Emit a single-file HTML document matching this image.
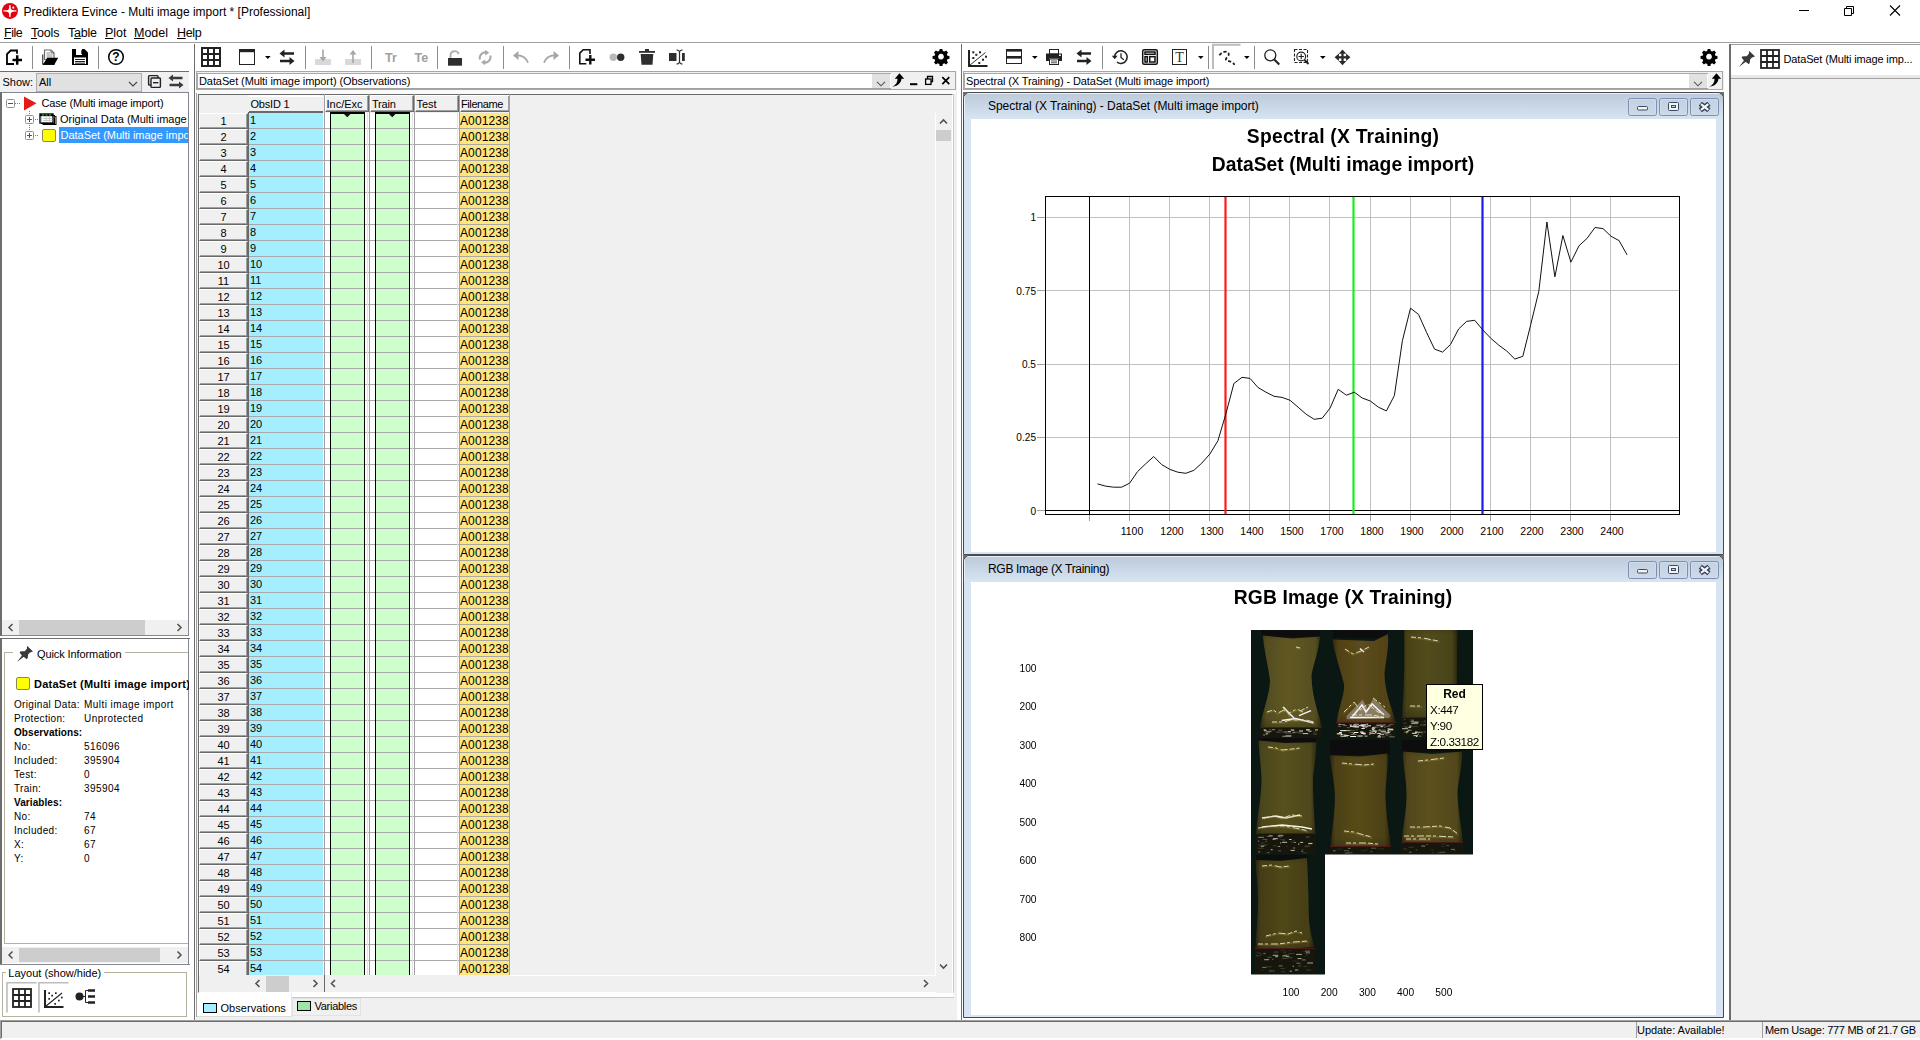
<!DOCTYPE html>
<html><head><meta charset="utf-8"><title>Prediktera Evince</title>
<style>
*{box-sizing:border-box;margin:0;padding:0}
html,body{width:1920px;height:1040px;overflow:hidden;background:#fff}
body{font-family:"Liberation Sans",sans-serif;font-size:11px;color:#000;position:relative}
.a{position:absolute}
.t{position:absolute;white-space:nowrap;line-height:1}
svg{position:absolute;overflow:visible}
.ui{font-size:12px}
.tah{font-size:11px;letter-spacing:.25px}
</style></head><body>
<!-- window bg -->
<div class="a" style="left:0;top:43px;width:1920px;height:995px;background:#f0f0f0"></div>
<!-- title bar -->
<svg style="left:0;top:0" width="24" height="24" viewBox="0 0 24 24">
 <circle cx="9.950" cy="10.950" r="8" fill="#e3000f"/>
 <path d="M9.300 4.900h1.300C10.600 9.700 11 10.300 16.400 10.300v1.300C11 11.600 10.600 12.200 10.600 17.100h-1.300C9.300 12.200 8.900 11.600 3.500 11.600v-1.300C8.900 10.300 9.300 9.700 9.300 4.900z" fill="#fff"/>
 <circle cx="13.300" cy="7.650" r="1.050" fill="#fff"/>
</svg>
<div class="t ui" style="left:23.5px;top:5.5px">Prediktera Evince - Multi image import * [Professional]</div>
<svg style="left:0;top:0" width="1920" height="24" viewBox="0 0 1920 24" fill="none" stroke="#000" stroke-width="1">
 <path d="M1799 10.5h10"/>
 <path d="M1844.5 8.5h7v7h-7z M1846.5 8.5v-2h7v7h-2"/>
 <path d="M1890 5.500l10 10M1900 5.500l-10 10" stroke-width="1.1"/>
</svg>
<!-- menu -->
<div class="t" style="left:4px;top:27px;font-size:12.5px;letter-spacing:-.45px"><u>F</u>ile</div>
<div class="t" style="left:31px;top:27px;font-size:12.5px;letter-spacing:-.2px"><u>T</u>ools</div>
<div class="t" style="left:68px;top:27px;font-size:12.5px;letter-spacing:-.25px">T<u>a</u>ble</div>
<div class="t" style="left:105px;top:27px;font-size:12.5px"><u>P</u>lot</div>
<div class="t" style="left:134px;top:27px;font-size:12.5px"><u>M</u>odel</div>
<div class="t" style="left:177px;top:27px;font-size:12.5px;letter-spacing:-.35px"><u>H</u>elp</div>
<div class="a" style="left:0;top:42px;width:1920px;height:1px;background:#a0a0a0"></div>
<!-- toolbars bg -->
<div class="a" style="left:0;top:43px;width:1920px;height:28px;background:#fff"></div>
<svg style="left:0;top:0" width="1920" height="74" viewBox="0 0 1920 74">
<!-- separators -->
<g stroke="#8d8d8d" stroke-width="1">
<path d="M32.5 46v23M98.500 46v23M305.500 46v23M371.500 46v23M437.500 46v23M503.500 46v23M569.500 46v23M1102.500 46v23M1208.500 46v23M1254.500 46v23"/>
</g>
<!-- new doc -->
<g fill="none" stroke="#000" stroke-width="1.8">
<path d="M17 53.700v-3.200h-6.300l-3.700 3.700v9.800h7"/>
<path d="M12.500 60h9.500M17.200 55.300v9.400" stroke-width="2.500"/>
</g>
<!-- open folder -->
<g>
<path d="M44.500 50h6.500l3 3v6.500h-9.500z" fill="#fff" stroke="#6a6a6a" stroke-width="1.200"/>
<path d="M51 50v3h3" fill="none" stroke="#6a6a6a" stroke-width="1"/>
<path d="M46.500 53h3.500M46.500 55h6M46.500 57h6" stroke="#8a8a8a" stroke-width="1"/>
<path d="M42.700 54.500v9.500" stroke="#555" stroke-width="1.400"/>
<path d="M43 64.500l4.200-6.700h11l-3.800 6.700z" fill="#000"/>
<path d="M42.500 64.300h12" stroke="#000" stroke-width="1.200"/>
</g>
<!-- save -->
<g>
<path d="M72 49h12.500l3.500 3.500v12.500h-16z" fill="#000"/>
<rect x="76" y="49" width="6" height="6" fill="#fff"/>
<rect x="81.300" y="50.200" width="1.600" height="3.800" fill="#000"/>
<rect x="74" y="57.500" width="12" height="6.500" fill="#fff"/>
<path d="M75 59.500h10M75 61.500h10M75 63.200h10" stroke="#000" stroke-width="0.9"/>
</g>
<!-- help -->
<g>
<circle cx="116" cy="57" r="7.300" fill="none" stroke="#000" stroke-width="1.500"/>
<text x="116" y="61.300" font-family="Liberation Sans" font-weight="bold" font-size="12" text-anchor="middle" fill="#000">?</text>
</g>
<!-- grid icon -->
<g fill="none" stroke="#222" stroke-width="2">
<rect x="202" y="48" width="18" height="18"/>
<path d="M208 48v18M214 48v18M202 54h18M202 60h18"/>
</g>
<!-- window icon -->
<g>
<rect x="239.500" y="49.500" width="15" height="15" fill="#fff" stroke="#222" stroke-width="1"/>
<rect x="239" y="49" width="16" height="3.200" fill="#222"/>
<path d="M265 56h5.600l-2.800 3z" fill="#000"/>
</g>
<!-- swap -->
<g id="swp" fill="#222">
<path d="M279.500 53.500l5-4v2.700h9.500v2.600h-9.500v2.700z"/>
<path d="M294.500 61l-5-4v2.700h-9.500v2.600h9.500v2.700z"/>
</g>
<!-- import/export gray -->
<g>
<rect x="315" y="59" width="16" height="6" fill="#d9d9d9"/>
<path d="M323 49.500v10" stroke="#a6a6a6" stroke-width="1.600"/>
<path d="M319.500 57h7l-3.500 4.500z" fill="#a6a6a6"/>
<rect x="345" y="59" width="16" height="6" fill="#d9d9d9"/>
<path d="M353 53v10" stroke="#a6a6a6" stroke-width="1.600"/>
<path d="M349.500 54.500h7l-3.500 -4.500z" fill="#a6a6a6"/>
</g>
<text x="385" y="62" font-family="Liberation Sans" font-weight="bold" font-size="12.500" fill="#a0a0a0">Tr</text>
<text x="414.500" y="62" font-family="Liberation Sans" font-weight="bold" font-size="12.500" fill="#a0a0a0">Te</text>
<!-- lock -->
<g>
<path d="M450.500 58v-2.500a4.200 4.200 0 0 1 8.200 -1.400" fill="none" stroke="#b0b0b0" stroke-width="1.900"/>
<rect x="448" y="58" width="14" height="7.700" fill="#2e2e2e"/>
</g>
<!-- refresh gray -->
<g fill="none" stroke="#a9a9a9" stroke-width="2">
<path d="M480 59.500a5.500 5.500 0 0 1 7 -6.800"/>
<path d="M490.300 55.500a5.500 5.500 0 0 1 -7 6.800"/>
</g>
<path d="M485.300 49.800l4 3 -4.300 2.600z M485 65.200l-4 -3 4.300 -2.600z" fill="#a9a9a9"/>
<!-- undo redo -->
<g fill="none" stroke="#a6a6a6" stroke-width="1.800">
<path d="M516 55.500c6 -0.500 10 2 12 7.300"/>
<path d="M556 55.500c-6 -0.500 -10 2 -12 7.300"/>
</g>
<path d="M513 55.500l5.500 -4.500v9z M559 55.500l-5.500 -4.500v9z" fill="#a6a6a6"/>
<!-- new doc 2 -->
<g fill="none" stroke="#111" stroke-width="1.600">
<path d="M590 54v-4.200h-6.800l-3.400 3.400v10.500h6.500"/>
<path d="M585.500 59.700h9.500M590.300 55v9.500" stroke-width="2.400"/>
</g>
<!-- dots -->
<circle cx="613.300" cy="57.300" r="3.700" fill="#b9b9b9"/>
<circle cx="620.700" cy="57.300" r="3.700" fill="#2e2e2e"/>
<!-- trash -->
<g fill="#2e2e2e">
<rect x="639" y="51" width="16" height="1.800"/>
<rect x="645" y="49" width="4" height="2.200"/>
<path d="M640.700 54h12.600l-0.800 10.800h-11z"/>
</g>
<!-- rename -->
<g fill="#2e2e2e">
<rect x="669" y="53" width="7.500" height="8"/>
<rect x="682" y="53" width="2.800" height="8"/>
<path d="M676.500 49.500c1.500 0 2.500 .5 3 1.500c.5-1 1.500-1.500 3-1.500v1c-1.500 0-2.400 .8-2.400 2v9c0 1.200 .9 2 2.400 2v1c-1.500 0-2.500-.5-3-1.500c-.5 1-1.500 1.500-3 1.500v-1c1.500 0 2.400-.8 2.400-2v-9c0-1.200-.9-2-2.400-2z"/>
</g>
<!-- gear 1 and 2 -->
<g id="gear" fill="#000">
<path transform="translate(941 56.700) scale(.96)" d="M-1.400-8h2.800l.5 2.100 1.500.6 1.900-1.200 2 2-1.200 1.900.6 1.500 2.100.5v2.800l-2.100.5-.6 1.500 1.200 1.900-2 2-1.900-1.200-1.500.6-.5 2.100h-2.800l-.5-2.100-1.500-.6-1.900 1.200-2-2 1.200-1.900-.6-1.500-2.100-.5v-2.800l2.100-.5.600-1.500-1.200-1.900 2-2 1.900 1.200 1.500-.6zM0-3a3 3 0 1 0 .001 0z" fill-rule="evenodd"/>
</g>
<use href="#gear" x="768" y="0"/>
<!-- scatter -->
<g>
<path d="M969 50v16h18.500" fill="none" stroke="#222" stroke-width="2"/>
<path d="M970 65l15.500 -12.500" stroke="#333" stroke-width="1"/>
<g fill="#222"><rect x="972.300" y="51.300" width="2" height="2"/><rect x="975.300" y="53.800" width="2" height="2"/><rect x="972.300" y="57" width="2" height="2"/><rect x="979" y="51.300" width="2" height="2"/><rect x="982" y="58.700" width="2" height="2"/><rect x="978.300" y="62" width="2" height="2"/><rect x="985" y="55.700" width="2" height="2"/></g>
</g>
<!-- split -->
<g>
<rect x="1006.500" y="49.500" width="15" height="14" fill="#fff" stroke="#222" stroke-width="1"/>
<rect x="1006" y="49" width="16" height="2.600" fill="#222"/>
<rect x="1006" y="56" width="16" height="2.600" fill="#222"/>
<path d="M1032 56h5.600l-2.800 3z" fill="#000"/>
</g>
<!-- printer -->
<g>
<rect x="1049.500" y="49.500" width="9" height="4.500" fill="#fff" stroke="#222" stroke-width="1"/>
<path d="M1046 53.500h16v7.500h-3v-2.500h-10v2.500h-3z" fill="#222"/>
<rect x="1059" y="54.500" width="1.800" height="1.500" fill="#fff"/>
<rect x="1049.500" y="59" width="9" height="5.500" fill="#fff" stroke="#222" stroke-width="1"/>
<path d="M1051 61h6M1051 62.800h6" stroke="#222" stroke-width=".8"/>
</g>
<use href="#swp" x="797" y="0"/>
<!-- history -->
<g fill="none" stroke="#222" stroke-width="1.600">
<path d="M1114.600 57a6.300 6.300 0 1 1 2.300 5"/>
<path d="M1121 53.200v4.200l2.800 2.300" stroke-width="1.300"/>
</g>
<path d="M1111.800 55.800h5.800l-2.900 3.400z" fill="#222"/>
<!-- layout -->
<g fill="none" stroke="#111" stroke-width="1.500">
<rect x="1142.700" y="49.700" width="14.600" height="14.600" rx="1.500"/>
<rect x="1145" y="52" width="10" height="2.300"/>
<rect x="1145" y="56.700" width="2.300" height="5.300"/>
<rect x="1149.700" y="56.700" width="5.300" height="5.300"/>
</g>
<!-- T -->
<g>
<rect x="1172.500" y="49.500" width="14" height="15" fill="#fff" stroke="#222" stroke-width="1"/>
<text x="1179.500" y="62" font-family="Liberation Serif" font-size="14" text-anchor="middle" fill="#333">T</text>
<path d="M1198 56h5.600l-2.800 3z" fill="#000"/>
</g>
<!-- pressed btn -->
<path d="M1213 69v-24.300h27.500" fill="none" stroke="#bcbcbc" stroke-width="2"/>
<!-- lasso -->
<g fill="none" stroke="#222" stroke-width="1.800" stroke-dasharray="3.200 2">
<path d="M1219.300 55.300c2-2.800 5.500-4.300 8-3.300c2.500 1.200 1.500 3.500 0 5c-1.600 1.600-2 3.300 0 3.800c2.500 .5 5 1.200 6.500 3"/>
</g>
<rect x="1233.300" y="63.300" width="1.700" height="1.700" fill="#222"/>
<path d="M1244 56h5.600l-2.800 3z" fill="#000"/>
<!-- magnifier -->
<g fill="none" stroke="#222">
<circle cx="1270.300" cy="55.300" r="5.500" stroke-width="1.300"/>
<path d="M1274.300 59.500l5 5" stroke-width="2"/>
</g>
<!-- zoom rect -->
<g fill="none" stroke="#222" stroke-width="1.100">
<rect x="1294.500" y="49.500" width="13" height="13" stroke-dasharray="3 1.500"/>
<circle cx="1301.200" cy="56.500" r="4.400"/>
<path d="M1301.200 53.800v5.400M1298.500 56.500h5.400" stroke-width="1.100"/>
<path d="M1304.500 60l4 4" stroke-width="2"/>
</g>
<path d="M1320 56h5.600l-2.800 3z" fill="#000"/>
<!-- move -->
<g fill="#2a2a2a">
<path d="M1342.500 49.400l3.800 4.300h-7.600zM1342.500 65.200l3.800 -4.300h-7.600zM1334.600 57.300l4.300 -3.800v7.600zM1350.400 57.300l-4.300 -3.800v7.600z"/>
<rect x="1341.400" y="53" width="2.200" height="8.600"/><rect x="1338.200" y="56.200" width="8.600" height="2.200"/>
</g>
</svg>
<!-- gap white between left panel and divider -->
<div class="a" style="left:189px;top:43px;width:5px;height:979px;background:#fff"></div>
<div class="a" style="left:194px;top:44px;width:1px;height:978px;background:#6d6d6d"></div>
<div class="a" style="left:195px;top:71px;width:1px;height:951px;background:#fff"></div>
<!-- show bar -->
<div class="a" style="left:0;top:71px;width:189px;height:22px;background:#f0f0f0;border-top:1px solid #6d6d6d"></div>
<div class="a" style="left:0;top:92px;width:2px;height:873px;background:#6d6d6d"></div>
<div class="t tah" style="left:2.500px;top:76.500px;letter-spacing:0">Show:</div>
<div class="a" style="left:36px;top:73px;width:106px;height:19px;background:#e1e1e1;border:1px solid #adadad"></div>
<div class="t tah" style="left:39px;top:76.500px;letter-spacing:0">All</div>
<svg style="left:0;top:0" width="190" height="100" viewBox="0 0 190 100" fill="none">
<path d="M129 82l4 4l4 -4" stroke="#444" stroke-width="1.100"/>
<rect x="148.600" y="75.600" width="9.400" height="9.400" rx=".8" stroke="#222" stroke-width="1.400" fill="#f0f0f0"/>
<rect x="151" y="78" width="9.400" height="9.400" rx=".8" stroke="#222" stroke-width="1.400" fill="#f0f0f0"/>
<path d="M153 82.700h5.400" stroke="#222" stroke-width="1.400"/>
<g fill="#3a3a3a">
<path d="M168.500 78l4.500-3.600v2.400h9.500v2.400h-9.500v2.400z"/>
<path d="M183.500 85l-4.500-3.600v2.400h-9.500v2.400h9.500v2.400z"/>
</g>
</svg>
<!-- tree box -->
<div class="a" style="left:1px;top:92px;width:188px;height:544px;background:#fff;border:1px solid #828790;border-left:1px solid #6d6d6d"></div>
<svg style="left:0;top:92px" width="190" height="60" viewBox="0 92 190 60">
<g stroke="#808080" stroke-width="1" stroke-dasharray="1 1" fill="none">
<path d="M15 103.500h6M29.500 111v5M29.500 125v5M35 119.500h4M35 135.500h4"/>
</g>
<g fill="#fff" stroke="#919191" stroke-width="1">
<rect x="6.500" y="99.500" width="8" height="8" rx="1"/>
<rect x="25.500" y="115.500" width="8" height="8" rx="1"/>
<rect x="25.500" y="131.500" width="8" height="8" rx="1"/>
</g>
<g stroke="#3b4fb0" stroke-width="1" fill="none">
<path d="M8 103.500h5M27 119.500h5M29.500 117v5M27 135.500h5M29.500 133v5"/>
</g>
<path d="M24 96.500l12.500 6.800l-12.500 7.200z" fill="#e41b1b"/>
<!-- original data icon -->
<g>
<rect x="43" y="116.500" width="13" height="8" fill="#fff" stroke="#000" stroke-width="1"/>
<rect x="41.500" y="115.500" width="13" height="8" fill="#fff" stroke="#000" stroke-width="1"/>
<rect x="40" y="114" width="13" height="9" fill="#fff" stroke="#000" stroke-width="1.400"/>
<path d="M40 115.200h13" stroke="#000" stroke-width="2"/>
<path d="M42 115h2M45.500 115h2M49 115h2" stroke="#1ee61e" stroke-width="1"/>
<path d="M41.300 117.500v1M41.300 119.500v1M41.300 121.500v1" stroke="#19a8ff" stroke-width="1.400"/>
<path d="M43 118.500h9.500M43 120.500h9.500M46 117v5.500M49.500 117v5.500" stroke="#bbb" stroke-width=".7"/>
<rect x="54.600" y="116.700" width="1" height="1.200" fill="#1ee61e"/>
</g>
<rect x="42.500" y="129.500" width="13" height="12" rx="1.500" fill="#ffff00" stroke="#8a8a55" stroke-width="1"/>
</svg>
<div class="a" style="left:59px;top:127px;width:129px;height:16px;background:#3399ff"></div>
<div class="t" style="left:41.500px;top:98px;font-size:11px;letter-spacing:-.16px">Case (Multi image import)</div>
<div class="t" style="left:60px;top:114px;font-size:11px;letter-spacing:-.02px;width:128px;overflow:hidden">Original Data (Multi image import)</div>
<div class="t" style="left:60.500px;top:130px;font-size:11px;letter-spacing:-.02px;color:#fff;width:127.500px;overflow:hidden">DataSet (Multi image import)</div>
<!-- tree h scrollbar -->
<div class="a" style="left:2px;top:620px;width:186px;height:15px;background:#f0f0f0"></div>
<div class="a" style="left:19px;top:620px;width:126px;height:15px;background:#cdcdcd"></div>
<svg style="left:0;top:616px" width="190" height="24" viewBox="0 616 190 24" fill="none" stroke="#505050" stroke-width="1.500">
<path d="M12.500 624l-3.500 3.500l3.500 3.500M177.500 624l3.500 3.500l-3.500 3.500"/>
</svg>
<div class="a" style="left:0;top:636px;width:190px;height:2px;background:#fff"></div>
<div class="a" style="left:0;top:638px;width:190px;height:1px;background:#6d6d6d"></div>
<!-- quick info -->
<div class="a" style="left:2px;top:639px;width:187px;height:327px;background:#fff;border-right:1px solid #828790"></div>
<div class="a" style="left:4px;top:652px;width:184px;height:292px;border:1px solid #b5b29f;border-right:none"></div>
<div class="a" style="left:13px;top:645px;width:112px;height:18px;background:#fff"></div>
<svg style="left:0;top:640px" width="190" height="60" viewBox="0 640 190 60">
<g id="pin" fill="#3a3a3a">
<path d="M27.300 646l5.700 5.500l-3 .900l-1.900 2.200l-.300 3.150l-1.200 1.550l-1.900 -1.900l-1.300 -.300l-6.400 4.900l4.900 -6.400l-2.200 -2.850l.300 -1.250l2.500 -.300h2.200l2.200 -2.500l.100 -2.200z"/>
</g>
<rect x="16.500" y="677.500" width="13" height="12" rx="1.500" fill="#ffff00" stroke="#8a8a55" stroke-width="1"/>
</svg>
<div class="t tah" style="left:37px;top:649px;letter-spacing:-.1px">Quick Information</div>
<div class="t" style="left:34px;top:679px;font-size:11px;font-weight:bold;letter-spacing:.25px;width:154.500px;overflow:hidden">DataSet (Multi image import)</div>
<div class="t" style="left:14px;top:698.300px;font-size:10px;line-height:14px;white-space:pre;letter-spacing:.33px">Original Data:
Protection:
<b style="letter-spacing:.08px">Observations:</b>
No:
Included:
Test:
Train:
<b style="letter-spacing:.08px">Variables:</b>
No:
Included:
X:
Y:</div>
<div class="t" style="left:84px;top:698.300px;font-size:10px;line-height:14px;white-space:pre;letter-spacing:.45px">Multi image import
Unprotected

516096
395904
0
395904

74
67
67
0</div>
<!-- quick info h scrollbar -->
<div class="a" style="left:2px;top:947px;width:186px;height:16px;background:#f0f0f0"></div>
<div class="a" style="left:19px;top:948px;width:141px;height:14px;background:#cdcdcd"></div>
<svg style="left:0;top:944px" width="190" height="24" viewBox="0 944 190 24" fill="none" stroke="#505050" stroke-width="1.500">
<path d="M12.500 951.500l-3.500 3.500l3.500 3.500M177.500 951.500l3.500 3.500l-3.500 3.500"/>
</svg>
<div class="a" style="left:0;top:964px;width:190px;height:1px;background:#828790"></div>
<div class="a" style="left:0;top:965px;width:189px;height:56px;background:#fff"></div>
<!-- layout group -->
<div class="a" style="left:2px;top:972px;width:185px;height:45px;border:1px solid #b5b29f"></div>
<div class="a" style="left:6px;top:966px;width:98px;height:14px;background:#fff"></div>
<div class="t tah" style="left:8.300px;top:968px;letter-spacing:0">Layout (show/hide)</div>
<svg style="left:0;top:980px" width="190" height="40" viewBox="0 980 190 40">
<path d="M7 1012.500v-29.800h29.500" fill="none" stroke="#bdbdbd" stroke-width="1.600"/>
<path d="M39 1012.500v-29.800h29.500" fill="none" stroke="#bdbdbd" stroke-width="1.600"/>
<g fill="none" stroke="#222" stroke-width="1.800">
<rect x="13" y="989" width="18" height="18"/>
<path d="M19 989v18M25 989v18M13 995h18M13 1001h18"/>
</g>
<g>
<path d="M45 990v17h18.500" fill="none" stroke="#222" stroke-width="2"/>
<path d="M46 1006l16 -13" stroke="#222" stroke-width="1.100"/>
<g fill="#222"><rect x="48.300" y="992.300" width="1.700" height="1.700"/><rect x="51.300" y="994.800" width="1.700" height="1.700"/><rect x="48.300" y="998" width="1.700" height="1.700"/><rect x="55" y="992.300" width="1.700" height="1.700"/><rect x="58" y="999.700" width="1.700" height="1.700"/><rect x="54.300" y="1003" width="1.700" height="1.700"/><rect x="61" y="996.700" width="1.700" height="1.700"/></g>
</g>
<g>
<circle cx="79.500" cy="996.500" r="4" fill="#222"/>
<path d="M82 996.500h4M85.500 990.500v12M85.500 990.500h3M85.500 1002.500h3" fill="none" stroke="#222" stroke-width="1"/><path d="M88 990.500h7M88 996.500h7M88 1002.500h7" fill="none" stroke="#222" stroke-width="2.500"/>
</g>
</svg>
<!-- center panel -->
<div class="a" style="left:957px;top:43px;width:4px;height:978px;background:#fff"></div>
<div class="a" style="left:961px;top:44px;width:1px;height:977px;background:#6d6d6d"></div>
<div class="a" style="left:962px;top:71px;width:1px;height:950px;background:#fff"></div>
<div class="a" style="left:196px;top:71px;width:760px;height:19px;background:#f0f0f0;border:1px solid #a8a8a8"></div>
<div class="a" style="left:197px;top:73px;width:694px;height:16px;background:#fff;border-bottom:1px solid #a0a0a0;border-top:1px solid #a9a9a9;border-left:1px solid #a9a9a9"></div>
<div class="a" style="left:872px;top:74px;width:18px;height:14px;background:#e1e1e1"></div>
<div class="t tah" style="left:199px;top:75.5px;letter-spacing:-.09px">DataSet (Multi image import) (Observations)</div>
<svg style="left:860px;top:70px" width="100" height="24" viewBox="860 70 100 24">
<path d="M877 81.800l4 4l4 -4" fill="none" stroke="#555" stroke-width="1.1"/>
<g id="parrow"><path d="M899.500 73.200l4.700 5.600h-2.700c-.3 4-3.500 7.300-9 8c3.300-1.500 5.200-4.500 5-8h-2.800z" fill="#000"/></g>
<rect x="910" y="83.200" width="7.300" height="2" fill="#000"/>
<path d="M927.500 76.500h5v5h-5z" fill="none" stroke="#000" stroke-width="1.300"/>
<rect x="925.600" y="79" width="5.400" height="5.400" fill="#f0f0f0" stroke="#000" stroke-width="1.300"/>
<path d="M942.300 77.200l7 7M949.300 77.200l-7 7" stroke="#000" stroke-width="1.700"/>
</svg>
<div class="a" style="left:196px;top:90px;width:760px;height:4px;background:#fafafa"></div>
<div class="a" style="left:196px;top:93px;width:1px;height:924px;background:#a0a0a0"></div>
<div class="a" style="left:198px;top:94px;width:755px;height:899px;background:#f0f0f0;border-top:1px solid #696969;border-left:1px solid #696969;border-right:1px solid #fff;border-bottom:1px solid #fff"></div>
<div class="a" style="left:953px;top:94px;width:1px;height:904px;background:#c8c8c8"></div>
<div class="a" style="left:197px;top:993px;width:757px;height:4px;background:#fff"></div>
<div class="a" style="left:291px;top:997px;width:663px;height:1px;background:#c8c8c8"></div>
<div class="a" style="left:199px;top:95px;width:49px;height:18px;background:#f0f0f0"></div>
<div class="a" style="left:249px;top:95px;width:74px;height:18px;background:#f0f0f0;border-top:2px solid #fff;border-bottom:2px solid #696969"></div>
<div class="a" style="left:325px;top:95px;width:44px;height:17px;background:#f0f0f0;border-top:1px solid #fff;border-left:1px solid #fff;border-right:1px solid #696969;border-bottom:1px solid #696969;box-shadow:inset -1px -1px 0 #a0a0a0;"></div>
<div class="a" style="left:370px;top:95px;width:44px;height:17px;background:#f0f0f0;border-top:1px solid #fff;border-left:1px solid #fff;border-right:1px solid #696969;border-bottom:1px solid #696969;box-shadow:inset -1px -1px 0 #a0a0a0;"></div>
<div class="a" style="left:415px;top:95px;width:44px;height:17px;background:#f0f0f0;border-top:1px solid #fff;border-left:1px solid #fff;border-right:1px solid #696969;border-bottom:1px solid #696969;box-shadow:inset -1px -1px 0 #a0a0a0;"></div>
<div class="a" style="left:460px;top:95px;width:50px;height:17px;background:#f0f0f0;border-top:1px solid #fff;border-left:1px solid #fff;border-right:1px solid #696969;border-bottom:1px solid #696969;box-shadow:inset -1px -1px 0 #a0a0a0;"></div>
<div class="a" style="left:248px;top:112px;width:1px;height:863px;background:#696969"></div>
<div class="a" style="left:249px;top:113px;width:74px;height:862px;background:#a5eeff"></div>
<div class="a" style="left:323px;top:113px;width:186px;height:862px;background:#fff"></div>
<div class="a" style="left:331px;top:113px;width:33px;height:862px;background:#ccffcc"></div>
<div class="a" style="left:376px;top:113px;width:33px;height:862px;background:#ccffcc"></div>
<div class="a" style="left:460px;top:113px;width:49px;height:862px;background:#ffe680"></div>
<div class="a" style="left:249px;top:113px;width:261px;height:862px;background:repeating-linear-gradient(to bottom,transparent 0,transparent 15px,#a9a9a9 15px,#a9a9a9 16px)"></div>
<div class="a" style="left:324px;top:94px;width:1px;height:881px;background:#a0a0a0"></div>
<div class="a" style="left:369px;top:94px;width:1px;height:881px;background:#a0a0a0"></div>
<div class="a" style="left:414px;top:94px;width:1px;height:881px;background:#a0a0a0"></div>
<div class="a" style="left:459px;top:94px;width:1px;height:881px;background:#a0a0a0"></div>
<div class="a" style="left:509px;top:94px;width:1px;height:881px;background:#a0a0a0"></div>
<div class="a" style="left:367px;top:113px;width:1px;height:862px;background:#e4e4e4"></div>
<div class="a" style="left:412px;top:113px;width:1px;height:862px;background:#e4e4e4"></div>
<div class="a" style="left:457px;top:113px;width:1px;height:862px;background:#e4e4e4"></div>
<div class="a" style="left:330px;top:112px;width:1px;height:863px;background:#000"></div>
<div class="a" style="left:364px;top:112px;width:1px;height:863px;background:#000"></div>
<div class="a" style="left:375px;top:112px;width:1px;height:863px;background:#000"></div>
<div class="a" style="left:409px;top:112px;width:1px;height:863px;background:#000"></div>
<div class="a" style="left:330px;top:112px;width:35px;height:2px;background:#000"></div>
<div class="a" style="left:375px;top:112px;width:35px;height:2px;background:#000"></div>
<svg style="left:320px;top:110px" width="100" height="10" viewBox="320 110 100 10"><path d="M343.500 113.500h7.500l-3.750 3.800zM388.500 113.500h7.500l-3.750 3.800z" fill="#111"/></svg>
<style>.rh{position:absolute;left:199px;width:49px;height:16px;background:#f0f0f0;border-top:1px solid #fff;border-left:1px solid #fff;border-right:1px solid #696969;border-bottom:1px solid #696969;box-shadow:inset -1px -1px 0 #a0a0a0}</style>
<div class="rh" style="top:113px"></div><div class="rh" style="top:129px"></div><div class="rh" style="top:145px"></div><div class="rh" style="top:161px"></div><div class="rh" style="top:177px"></div><div class="rh" style="top:193px"></div><div class="rh" style="top:209px"></div><div class="rh" style="top:225px"></div><div class="rh" style="top:241px"></div><div class="rh" style="top:257px"></div><div class="rh" style="top:273px"></div><div class="rh" style="top:289px"></div><div class="rh" style="top:305px"></div><div class="rh" style="top:321px"></div><div class="rh" style="top:337px"></div><div class="rh" style="top:353px"></div><div class="rh" style="top:369px"></div><div class="rh" style="top:385px"></div><div class="rh" style="top:401px"></div><div class="rh" style="top:417px"></div><div class="rh" style="top:433px"></div><div class="rh" style="top:449px"></div><div class="rh" style="top:465px"></div><div class="rh" style="top:481px"></div><div class="rh" style="top:497px"></div><div class="rh" style="top:513px"></div><div class="rh" style="top:529px"></div><div class="rh" style="top:545px"></div><div class="rh" style="top:561px"></div><div class="rh" style="top:577px"></div><div class="rh" style="top:593px"></div><div class="rh" style="top:609px"></div><div class="rh" style="top:625px"></div><div class="rh" style="top:641px"></div><div class="rh" style="top:657px"></div><div class="rh" style="top:673px"></div><div class="rh" style="top:689px"></div><div class="rh" style="top:705px"></div><div class="rh" style="top:721px"></div><div class="rh" style="top:737px"></div><div class="rh" style="top:753px"></div><div class="rh" style="top:769px"></div><div class="rh" style="top:785px"></div><div class="rh" style="top:801px"></div><div class="rh" style="top:817px"></div><div class="rh" style="top:833px"></div><div class="rh" style="top:849px"></div><div class="rh" style="top:865px"></div><div class="rh" style="top:881px"></div><div class="rh" style="top:897px"></div><div class="rh" style="top:913px"></div><div class="rh" style="top:929px"></div><div class="rh" style="top:945px"></div><div class="rh" style="top:961px;height:14px;border-bottom:none;box-shadow:inset -1px 0 0 #a0a0a0"></div>
<div class="a" style="left:199px;top:113.300px;width:49px;height:861.700px;overflow:hidden;text-align:center;font-size:11px;line-height:16px">1<br>2<br>3<br>4<br>5<br>6<br>7<br>8<br>9<br>10<br>11<br>12<br>13<br>14<br>15<br>16<br>17<br>18<br>19<br>20<br>21<br>22<br>23<br>24<br>25<br>26<br>27<br>28<br>29<br>30<br>31<br>32<br>33<br>34<br>35<br>36<br>37<br>38<br>39<br>40<br>41<br>42<br>43<br>44<br>45<br>46<br>47<br>48<br>49<br>50<br>51<br>52<br>53<br>54</div>
<div class="a" style="left:250px;top:113px;width:72px;height:862px;overflow:hidden;font-size:11px;line-height:16px;margin-top:-.9px">1<br>2<br>3<br>4<br>5<br>6<br>7<br>8<br>9<br>10<br>11<br>12<br>13<br>14<br>15<br>16<br>17<br>18<br>19<br>20<br>21<br>22<br>23<br>24<br>25<br>26<br>27<br>28<br>29<br>30<br>31<br>32<br>33<br>34<br>35<br>36<br>37<br>38<br>39<br>40<br>41<br>42<br>43<br>44<br>45<br>46<br>47<br>48<br>49<br>50<br>51<br>52<br>53<br>54</div>
<div class="a" style="left:460px;top:113px;width:49px;height:862px;overflow:hidden;font-size:12px;line-height:16px;letter-spacing:.12px">A001238<br>A001238<br>A001238<br>A001238<br>A001238<br>A001238<br>A001238<br>A001238<br>A001238<br>A001238<br>A001238<br>A001238<br>A001238<br>A001238<br>A001238<br>A001238<br>A001238<br>A001238<br>A001238<br>A001238<br>A001238<br>A001238<br>A001238<br>A001238<br>A001238<br>A001238<br>A001238<br>A001238<br>A001238<br>A001238<br>A001238<br>A001238<br>A001238<br>A001238<br>A001238<br>A001238<br>A001238<br>A001238<br>A001238<br>A001238<br>A001238<br>A001238<br>A001238<br>A001238<br>A001238<br>A001238<br>A001238<br>A001238<br>A001238<br>A001238<br>A001238<br>A001238<br>A001238<br>A001238</div>
<div class="t" style="left:250.5px;top:98.500px;font-size:11px;letter-spacing:-0.2px">ObsID 1</div>
<div class="t" style="left:326.5px;top:98.500px;font-size:11px;letter-spacing:0px">Inc/Exc</div>
<div class="t" style="left:372px;top:98.500px;font-size:11px;letter-spacing:-0.2px">Train</div>
<div class="t" style="left:416.5px;top:98.500px;font-size:11px;letter-spacing:0px">Test</div>
<div class="t" style="left:461px;top:98.500px;font-size:11px;letter-spacing:-0.4px">Filename</div>
<div class="a" style="left:199px;top:975px;width:736px;height:17px;background:#f0f0f0"></div>
<div class="a" style="left:266px;top:976px;width:23px;height:16px;background:#cdcdcd"></div>
<div class="a" style="left:324px;top:975px;width:1px;height:17px;background:#696969"></div>
<div class="a" style="left:935px;top:113px;width:1px;height:862px;background:#fff"></div>
<div class="a" style="left:198px;top:975px;width:737px;height:0;border-top:0 solid #fff"></div>
<div class="a" style="left:936px;top:113px;width:16px;height:880px;background:#f0f0f0"></div>
<div class="a" style="left:936px;top:130px;width:15px;height:11px;background:#cdcdcd"></div>
<div class="a" style="left:510px;top:975px;width:426px;height:1px;background:#fff"></div>
<svg style="left:196px;top:110px" width="760" height="890" viewBox="196 110 760 890" fill="none" stroke="#505050" stroke-width="1.600">
<path d="M940 123.500l3.500 -3.500l3.500 3.500M940 964.500l3.500 3.500l3.500 -3.500"/>
<path d="M259.500 980l-3.500 3.500l3.500 3.500M313.500 980l3.500 3.500l-3.500 3.500M335 980l-3.500 3.500l3.500 3.500M924 980l3.500 3.500l-3.500 3.500"/>
</svg>
<div class="a" style="left:197px;top:993px;width:95px;height:24px;background:#fff;border-bottom:1px solid #dcdcdc;border-right:1px solid #e8e8e8"></div>
<div class="a" style="left:292px;top:998px;width:69px;height:18px;background:#f0f0f0;border:1px solid #e2e2e2"></div>
<div class="a" style="left:203px;top:1003px;width:14px;height:10px;background:#a5eeff;border:1px solid #000"></div>
<div class="a" style="left:297px;top:1001px;width:14px;height:10px;background:#9de6a8;border:1px solid #000"></div>
<div class="t tah" style="left:220.500px;top:1002.500px;letter-spacing:.05px">Observations</div>
<div class="t tah" style="left:314.500px;top:1000.500px;letter-spacing:-.28px">Variables</div>
<!-- right plot panel title strip -->
<div class="a" style="left:963px;top:71px;width:760px;height:19px;background:#f0f0f0;border:1px solid #a8a8a8"></div>
<div class="a" style="left:964px;top:73px;width:744px;height:16px;background:#fff;border-bottom:1px solid #a0a0a0;border-top:1px solid #a9a9a9;border-left:1px solid #a9a9a9"></div>
<div class="a" style="left:1689px;top:74px;width:18px;height:14px;background:#e1e1e1"></div>
<div class="t tah" style="left:966px;top:75.500px;letter-spacing:-.13px">Spectral (X Training) - DataSet (Multi image import)</div>
<svg style="left:1680px;top:70px" width="50" height="24" viewBox="1680 70 50 24">
<path d="M1694 81.800l4 4l4 -4" fill="none" stroke="#555" stroke-width="1.100"/>
<path transform="translate(817 0)" d="M899.500 73.200l4.700 5.600h-2.700c-.3 4-3.500 7.300-9 8c3.300-1.500 5.200-4.500 5-8h-2.800z" fill="#000"/>
</svg>
<div class="a" style="left:963px;top:90px;width:766px;height:931px;background:#fff"></div>
<!-- MDI windows -->
<style>
.mdi{position:absolute;left:963px;width:761px;height:463px;border:1px solid #4a4a4a;border-radius:7px 7px 0 0;background:#d7e4f2;overflow:hidden}
.mdi .tb{position:absolute;left:0;top:0;width:759px;height:26px;background:linear-gradient(#bccbdb 0,#c3d1e1 30%,#d7e4f2 100%);box-shadow:inset 1px 1px 0 #e8eff7}
.mdi .ct{position:absolute;left:7px;top:26px;width:745px;height:433px;background:#fff}
.mb{position:absolute;top:5px;width:29px;height:18px;border:1px solid #7f8fb1;border-radius:2.500px;box-shadow:inset 0 0 0 1px #cfdcea;background:linear-gradient(#c3d1e2,#cbd9e8)}
</style>
<div class="a" style="left:963px;top:92px;width:7px;height:7px;background:#707070"></div><div class="a" style="left:1717px;top:92px;width:7px;height:7px;background:#707070"></div><div class="a" style="left:963px;top:555px;width:7px;height:7px;background:#707070"></div><div class="a" style="left:1717px;top:555px;width:7px;height:7px;background:#707070"></div>
<div class="mdi" style="top:92px"><div class="tb"></div><div class="ct"></div>
<div class="mb" style="left:664px"></div><div class="mb" style="left:695px"></div><div class="mb" style="left:726px"></div></div>
<div class="mdi" style="top:555px"><div class="tb"></div><div class="ct"></div>
<div class="mb" style="left:664px"></div><div class="mb" style="left:695px"></div><div class="mb" style="left:726px"></div></div>
<div class="t ui" style="left:988px;top:99.500px;letter-spacing:-.04px">Spectral (X Training) - DataSet (Multi image import)</div>
<div class="t ui" style="left:988px;top:562.500px;letter-spacing:-.31px">RGB Image (X Training)</div>
<svg style="left:1620px;top:90px" width="110" height="500" viewBox="1620 90 110 500">
<g id="mdig">
<rect x="1637.500" y="106.500" width="10" height="3.500" rx="1" fill="#f3f3f0" stroke="#3d4a66" stroke-width="1"/>
<rect x="1668.500" y="102.500" width="10" height="8" rx="1" fill="#f3f3f0" stroke="#3d4a66" stroke-width="1"/>
<rect x="1671.500" y="105.500" width="4" height="2" fill="#c9d6e6" stroke="#3d4a66" stroke-width="1"/>
<path d="M1700.300 103.700l8.700 6.600M1709 103.700l-8.700 6.600" stroke="#333f5c" stroke-width="5.200" stroke-linecap="butt"/>
<path d="M1701 104.200l7.300 5.600M1708.300 104.200l-7.300 5.600" stroke="#f6f6f3" stroke-width="2.100"/>
</g>
<use href="#mdig" y="463"/>
</svg>
<!-- chart 1 -->
<div class="t" style="left:1043px;width:600px;text-align:center;top:126.500px;font-size:19.300px;font-weight:bold;letter-spacing:.23px;transform:scaleY(1.04);transform-origin:0 80%">Spectral (X Training)</div>
<div class="t" style="left:1043px;width:600px;text-align:center;top:154.500px;font-size:19.300px;font-weight:bold;letter-spacing:.04px;transform:scaleY(1.04);transform-origin:0 80%">DataSet (Multi image import)</div>
<svg style="left:971px;top:119px" width="745" height="433" viewBox="971 119 745 433">
<g stroke="#c0c0c0" stroke-width="1" fill="none">
<path d="M1129.500 197v317M1169.500 197v317M1209.500 197v317M1249.500 197v317M1289.500 197v317M1329.500 197v317M1370.500 197v317M1410.500 197v317M1450.500 197v317M1490.500 197v317M1530.500 197v317M1570.500 197v317M1610.500 197v317"/>
<path d="M1046 217.500h634M1046 290.500h634M1046 364.500h634M1046 437.500h634"/>
</g>
<g stroke="#a0a0a0" stroke-width="1" fill="none">
<path d="M1089.500 515v6M1129.500 515v6M1169.500 515v6M1209.500 515v6M1249.500 515v6M1289.500 515v6M1329.500 515v6M1370.500 515v6M1410.500 515v6M1450.500 515v6M1490.500 515v6M1530.500 515v6M1570.500 515v6M1610.500 515v6"/>
<path d="M1037 217.500h8M1037 290.500h8M1037 364.500h8M1037 437.500h8M1037 510.500h8"/>
</g>
<path d="M1089.500 197v318M1046 510.500h634" stroke="#000" stroke-width="1" fill="none"/>
<path d="M1225.500 197v317" stroke="#ff1a1a" stroke-width="2.200"/>
<path d="M1353.500 197v317" stroke="#1aee1a" stroke-width="2.200"/>
<path d="M1482.500 197v317" stroke="#1a1aee" stroke-width="2.200"/>
<polyline fill="none" stroke="#111" stroke-width="1" points="1097.5,483.9 1105.5,486.1 1113.6,487.2 1121.6,487.2 1129.6,483.2 1137.6,471.5 1145.7,463.8 1153.7,456.5 1161.7,464.6 1169.7,469.3 1177.8,472.2 1185.8,473.3 1193.8,470.4 1201.8,463.1 1209.9,454.0 1217.9,440.8 1225.9,413.8 1233.9,383.5 1242.0,377.3 1250.0,378.4 1258.0,387.5 1266.0,392.2 1274.1,396.3 1282.1,397.4 1290.1,400.3 1298.1,407.2 1306.1,414.2 1314.2,419.3 1322.2,418.2 1330.2,407.9 1338.2,389.3 1346.3,395.2 1354.3,392.2 1362.3,398.1 1370.3,401.0 1378.4,407.2 1386.4,410.9 1394.4,395.5 1402.4,340.7 1410.5,308.2 1418.5,314.4 1426.5,332.3 1434.5,349.1 1442.6,352.1 1450.6,344.4 1458.6,329.0 1466.6,321.4 1474.7,320.3 1482.7,329.8 1490.7,338.2 1498.7,345.1 1506.7,351.0 1514.8,359.0 1522.8,356.4 1530.8,324.3 1538.8,291.4 1546.9,222.0 1554.9,276.8 1562.9,235.5 1570.9,262.2 1579.0,245.8 1587.0,238.4 1595.0,227.5 1603.0,228.6 1611.1,236.3 1619.1,240.6 1627.1,254.9"/>
<rect x="1045.500" y="196.500" width="634" height="318" fill="none" stroke="#000" stroke-width="1"/>
<g font-family="Liberation Sans" font-size="10.500" fill="#000">
<g text-anchor="end" font-size="10.100">
<text x="1036" y="221.300">1</text><text x="1036" y="294.600">0.75</text><text x="1036" y="368.300">0.5</text><text x="1036" y="441.300">0.25</text><text x="1036" y="514.800">0</text>
</g>
<g text-anchor="middle">
<text x="1132" y="535">1100</text><text x="1172" y="535">1200</text><text x="1212" y="535">1300</text><text x="1252" y="535">1400</text><text x="1292" y="535">1500</text><text x="1332" y="535">1700</text><text x="1372" y="535">1800</text><text x="1412" y="535">1900</text><text x="1452" y="535">2000</text><text x="1492" y="535">2100</text><text x="1532" y="535">2200</text><text x="1572" y="535">2300</text><text x="1612" y="535">2400</text>
</g>
</g>
</svg>
<!-- RGB image chart -->
<div class="t" style="left:1043px;width:600px;text-align:center;top:588px;font-size:19.300px;font-weight:bold;letter-spacing:.15px;transform:scaleY(1.04);transform-origin:0 80%">RGB Image (X Training)</div>
<svg style="left:971px;top:582px" width="745" height="433" viewBox="971 582 745 433">
<defs>
<linearGradient id="bg1" x1="0" x2="1" y1="0" y2="0"><stop offset="0" stop-color="#35300d"/><stop offset=".1" stop-color="#50491b"/><stop offset=".5" stop-color="#5b5321"/><stop offset=".9" stop-color="#4d4619"/><stop offset="1" stop-color="#302b0b"/></linearGradient>
<linearGradient id="bg2" x1="0" x2="1" y1="0" y2="0"><stop offset="0" stop-color="#33290b"/><stop offset=".1" stop-color="#524417"/><stop offset=".5" stop-color="#5a4b1c"/><stop offset=".9" stop-color="#4b3e14"/><stop offset="1" stop-color="#2d2409"/></linearGradient>
<linearGradient id="shade" x1="0" x2="0" y1="0" y2="1"><stop offset="0" stop-color="#000" stop-opacity=".1"/><stop offset=".06" stop-color="#000" stop-opacity="0"/><stop offset=".9" stop-color="#000" stop-opacity="0"/><stop offset="1" stop-color="#000" stop-opacity=".15"/></linearGradient>
<filter id="bl" x="-5%" y="-5%" width="110%" height="110%"><feGaussianBlur stdDeviation=".7"/></filter>
<filter id="bl2" x="-5%" y="-5%" width="110%" height="110%"><feGaussianBlur stdDeviation=".45"/></filter>
<clipPath id="imgclip"><path d="M1251 630h222v224.500h-148v120h-74z"/></clipPath>
</defs>
<path d="M1251 630h222v224.500h-148v120h-74z" fill="#0b1712"/>
<g clip-path="url(#imgclip)">
<rect x="1262" y="630" width="58" height="7" fill="#07100c" filter="url(#bl)"/>
<rect x="1333" y="630" width="55" height="8" fill="#07100c" filter="url(#bl)"/>
<rect x="1258" y="738" width="58" height="5" fill="#07100c" filter="url(#bl)"/>
<rect x="1330" y="740" width="60" height="15" fill="#07100c" filter="url(#bl)"/>
<rect x="1402" y="740" width="60" height="12" fill="#07100c" filter="url(#bl)"/>
<rect x="1256" y="855" width="52" height="5" fill="#07100c" filter="url(#bl)"/>
<linearGradient id="g0" x1="0" x2="1" y1="0" y2="0"><stop offset="0" stop-color="#342f13"/><stop offset=".09" stop-color="#534c1f"/><stop offset=".45" stop-color="#605824"/><stop offset=".9" stop-color="#554e20"/><stop offset="1" stop-color="#2f2b12"/></linearGradient>
<path d="M1262.7,635.5 L1292,638.5 L1320,636.5 C1318,655 1312,668 1311.5,676 C1312,700 1320,715 1321.5,727 L1260.3,727 C1262,712 1270,695 1270,680 C1268,665 1264,650 1262.7,635.5Z" fill="url(#g0)" filter="url(#bl)"/>
<path d="M1262.7,635.5 L1292,638.5 L1320,636.5 C1318,655 1312,668 1311.5,676 C1312,700 1320,715 1321.5,727 L1260.3,727 C1262,712 1270,695 1270,680 C1268,665 1264,650 1262.7,635.5Z" fill="url(#shade)"/>
<rect x="1260" y="727" width="62" height="11" fill="#17160d"/>
<rect x="1260" y="727" width="62" height="1" fill="#4a1a1a"/>
<g filter="url(#bl2)"><path d="M1278.1 730.2h4.3" stroke="#55553f" stroke-width="1"/><path d="M1306.0 729.8h3.9" stroke="#e8e8d8" stroke-width="1"/><path d="M1272.0 729.7h3.1" stroke="#8a8a70" stroke-width="1"/><path d="M1265.1 732.4h5.1" stroke="#55553f" stroke-width="1"/><path d="M1313.1 734.0h3.9" stroke="#55553f" stroke-width="1"/><path d="M1292.3 732.2h5.9" stroke="#55553f" stroke-width="1"/><path d="M1291.2 730.1h3.1" stroke="#e8e8d8" stroke-width="1"/><path d="M1266.6 731.5h5.1" stroke="#8a8a70" stroke-width="1"/><path d="M1265.8 733.6h1.9" stroke="#55553f" stroke-width="1"/><path d="M1290.7 729.5h1.3" stroke="#8a8a70" stroke-width="1"/><path d="M1287.8 733.3h4.9" stroke="#3a3a2c" stroke-width="1"/><path d="M1292.8 732.6h2.5" stroke="#8a8a70" stroke-width="1"/><path d="M1299.1 731.0h3.9" stroke="#e8e8d8" stroke-width="1"/><path d="M1287.7 731.7h3.2" stroke="#e8e8d8" stroke-width="1"/><path d="M1314.9 729.9h3.1" stroke="#c8c8b0" stroke-width="1"/><path d="M1268.5 732.9h1.2" stroke="#55553f" stroke-width="1"/><path d="M1302.8 733.6h5.4" stroke="#c8c8b0" stroke-width="1"/><path d="M1279.0 731.8h3.5" stroke="#3a3a2c" stroke-width="1"/><path d="M1263.9 729.7h2.3" stroke="#55553f" stroke-width="1"/><path d="M1263.4 734.6h4.2" stroke="#3a3a2c" stroke-width="1"/><path d="M1275.9 732.1h4.3" stroke="#55553f" stroke-width="1"/><path d="M1312.7 731.8h4.1" stroke="#3a3a2c" stroke-width="1"/><path d="M1263.3 735.1h1.6" stroke="#8a8a70" stroke-width="1"/><path d="M1282.3 736.3h3.5" stroke="#8a8a70" stroke-width="1"/><path d="M1285.2 733.4h5.4" stroke="#3a3a2c" stroke-width="1"/><path d="M1308.4 731.2h3.1" stroke="#c8c8b0" stroke-width="1"/><path d="M1298.2 732.0h2.2" stroke="#55553f" stroke-width="1"/><path d="M1269.9 730.9h2.2" stroke="#3a3a2c" stroke-width="1"/><path d="M1306.5 730.5h2.4" stroke="#8a8a70" stroke-width="1"/><path d="M1283.5 732.0h3.8" stroke="#8a8a70" stroke-width="1"/><path d="M1298.7 733.1h4.1" stroke="#55553f" stroke-width="1"/><path d="M1285.6 736.0h5.8" stroke="#e8e8d8" stroke-width="1"/><path d="M1282.0 732.2h1.5" stroke="#3a3a2c" stroke-width="1"/><path d="M1263.5 729.5h2.0" stroke="#8a8a70" stroke-width="1"/><path d="M1266.2 733.8h1.5" stroke="#e8e8d8" stroke-width="1"/><path d="M1268.5 729.8h2.8" stroke="#55553f" stroke-width="1"/><path d="M1263.9 730.7h2.9" stroke="#c8c8b0" stroke-width="1"/></g>
<linearGradient id="g1" x1="0" x2="1" y1="0" y2="0"><stop offset="0" stop-color="#32280e"/><stop offset=".09" stop-color="#504117"/><stop offset=".45" stop-color="#5c4b1b"/><stop offset=".9" stop-color="#514218"/><stop offset="1" stop-color="#2d250d"/></linearGradient>
<path d="M1332.5,639.5 L1374,641 L1388,634 C1389,650 1385,665 1384.5,674 C1385,695 1393,710 1395.5,722 L1336.8,723 C1338,708 1345,695 1344,684 C1340,668 1334,652 1332.5,639.5Z" fill="url(#g1)" filter="url(#bl)"/>
<path d="M1332.5,639.5 L1374,641 L1388,634 C1389,650 1385,665 1384.5,674 C1385,695 1393,710 1395.5,722 L1336.8,723 C1338,708 1345,695 1344,684 C1340,668 1334,652 1332.5,639.5Z" fill="url(#shade)"/>
<rect x="1336" y="722" width="60" height="16" fill="#17160d"/>
<rect x="1336" y="722" width="60" height="1" fill="#4a1a1a"/>
<g filter="url(#bl2)"><path d="M1387.6 731.8h3.4" stroke="#77775c" stroke-width="1"/><path d="M1381.8 736.9h3.3" stroke="#55553f" stroke-width="1"/><path d="M1352.8 725.9h4.7" stroke="#e8e8e0" stroke-width="1"/><path d="M1361.8 733.0h3.6" stroke="#b8b8a0" stroke-width="1"/><path d="M1387.4 730.9h1.7" stroke="#ffffff" stroke-width="1"/><path d="M1385.4 733.9h2.5" stroke="#77775c" stroke-width="1"/><path d="M1373.6 727.4h2.8" stroke="#b8b8a0" stroke-width="1"/><path d="M1355.2 726.9h3.7" stroke="#ffffff" stroke-width="1"/><path d="M1353.8 726.9h5.1" stroke="#b8b8a0" stroke-width="1"/><path d="M1379.5 734.6h4.7" stroke="#b8b8a0" stroke-width="1"/><path d="M1346.8 730.4h4.7" stroke="#77775c" stroke-width="1"/><path d="M1378.7 730.1h2.0" stroke="#ffffff" stroke-width="1"/><path d="M1387.7 729.8h5.7" stroke="#e8e8e0" stroke-width="1"/><path d="M1387.6 728.7h2.1" stroke="#b8b8a0" stroke-width="1"/><path d="M1361.4 728.4h3.4" stroke="#ffffff" stroke-width="1"/><path d="M1381.4 730.2h4.3" stroke="#77775c" stroke-width="1"/><path d="M1381.1 725.6h2.9" stroke="#b8b8a0" stroke-width="1"/><path d="M1361.8 726.3h4.9" stroke="#e8e8e0" stroke-width="1"/><path d="M1340.7 736.3h4.6" stroke="#55553f" stroke-width="1"/><path d="M1357.7 736.3h4.6" stroke="#b8b8a0" stroke-width="1"/><path d="M1389.6 724.4h4.0" stroke="#55553f" stroke-width="1"/><path d="M1379.6 725.9h5.1" stroke="#55553f" stroke-width="1"/><path d="M1371.5 728.6h3.7" stroke="#b8b8a0" stroke-width="1"/><path d="M1337.2 734.4h4.6" stroke="#77775c" stroke-width="1"/><path d="M1364.4 736.1h3.2" stroke="#b8b8a0" stroke-width="1"/><path d="M1380.6 726.7h2.3" stroke="#e8e8e0" stroke-width="1"/><path d="M1363.1 733.9h2.6" stroke="#ffffff" stroke-width="1"/><path d="M1358.6 725.7h5.6" stroke="#e8e8e0" stroke-width="1"/><path d="M1384.5 732.6h5.1" stroke="#ffffff" stroke-width="1"/><path d="M1358.7 735.9h3.5" stroke="#ffffff" stroke-width="1"/><path d="M1344.2 730.6h5.4" stroke="#b8b8a0" stroke-width="1"/><path d="M1368.9 734.1h1.7" stroke="#b8b8a0" stroke-width="1"/><path d="M1361.6 733.4h3.8" stroke="#e8e8e0" stroke-width="1"/><path d="M1372.8 730.9h3.4" stroke="#77775c" stroke-width="1"/><path d="M1383.7 724.7h2.0" stroke="#77775c" stroke-width="1"/><path d="M1377.7 730.6h3.8" stroke="#77775c" stroke-width="1"/><path d="M1359.9 732.0h3.5" stroke="#ffffff" stroke-width="1"/><path d="M1346.8 727.6h3.5" stroke="#55553f" stroke-width="1"/><path d="M1363.4 727.2h3.6" stroke="#e8e8e0" stroke-width="1"/><path d="M1385.8 735.6h2.0" stroke="#55553f" stroke-width="1"/><path d="M1343.4 725.6h3.2" stroke="#77775c" stroke-width="1"/><path d="M1372.2 729.6h2.1" stroke="#e8e8e0" stroke-width="1"/><path d="M1378.3 735.7h1.8" stroke="#e8e8e0" stroke-width="1"/><path d="M1343.7 735.5h5.8" stroke="#b8b8a0" stroke-width="1"/><path d="M1376.3 725.2h5.4" stroke="#b8b8a0" stroke-width="1"/><path d="M1389.5 734.8h1.8" stroke="#55553f" stroke-width="1"/><path d="M1389.7 729.2h3.1" stroke="#e8e8e0" stroke-width="1"/><path d="M1353.2 733.4h1.1" stroke="#ffffff" stroke-width="1"/><path d="M1360.8 733.1h2.9" stroke="#ffffff" stroke-width="1"/><path d="M1369.7 730.7h1.3" stroke="#b8b8a0" stroke-width="1"/><path d="M1388.5 725.4h2.3" stroke="#77775c" stroke-width="1"/><path d="M1384.9 726.4h4.8" stroke="#55553f" stroke-width="1"/><path d="M1381.9 732.8h5.7" stroke="#55553f" stroke-width="1"/><path d="M1344.1 735.9h3.9" stroke="#e8e8e0" stroke-width="1"/><path d="M1340.8 724.7h4.4" stroke="#55553f" stroke-width="1"/><path d="M1384.3 727.5h1.1" stroke="#77775c" stroke-width="1"/><path d="M1379.3 725.1h5.3" stroke="#77775c" stroke-width="1"/><path d="M1350.3 725.6h1.1" stroke="#ffffff" stroke-width="1"/><path d="M1358.6 735.9h4.1" stroke="#77775c" stroke-width="1"/><path d="M1364.5 727.1h1.5" stroke="#b8b8a0" stroke-width="1"/><path d="M1350.1 726.4h5.7" stroke="#e8e8e0" stroke-width="1"/><path d="M1364.7 726.7h3.2" stroke="#b8b8a0" stroke-width="1"/><path d="M1350.6 734.4h6.0" stroke="#77775c" stroke-width="1"/><path d="M1336.8 733.5h3.8" stroke="#b8b8a0" stroke-width="1"/><path d="M1363.8 727.2h3.2" stroke="#55553f" stroke-width="1"/><path d="M1371.5 731.1h5.4" stroke="#ffffff" stroke-width="1"/><path d="M1352.6 726.8h2.1" stroke="#b8b8a0" stroke-width="1"/><path d="M1380.9 733.2h4.2" stroke="#55553f" stroke-width="1"/><path d="M1389.4 736.8h5.2" stroke="#77775c" stroke-width="1"/><path d="M1339.8 733.6h2.3" stroke="#b8b8a0" stroke-width="1"/><path d="M1339.0 732.6h2.9" stroke="#ffffff" stroke-width="1"/><path d="M1372.2 727.7h2.2" stroke="#e8e8e0" stroke-width="1"/><path d="M1338.4 726.4h2.3" stroke="#77775c" stroke-width="1"/><path d="M1350.2 736.5h5.9" stroke="#ffffff" stroke-width="1"/><path d="M1353.5 724.4h5.4" stroke="#b8b8a0" stroke-width="1"/><path d="M1355.3 724.0h2.9" stroke="#55553f" stroke-width="1"/><path d="M1351.1 732.5h2.2" stroke="#77775c" stroke-width="1"/><path d="M1340.9 734.6h1.7" stroke="#ffffff" stroke-width="1"/><path d="M1338.3 724.3h2.5" stroke="#b8b8a0" stroke-width="1"/><path d="M1340.6 736.4h5.3" stroke="#b8b8a0" stroke-width="1"/><path d="M1371.5 733.3h5.4" stroke="#55553f" stroke-width="1"/><path d="M1377.3 733.4h3.5" stroke="#e8e8e0" stroke-width="1"/><path d="M1375.1 732.4h1.2" stroke="#ffffff" stroke-width="1"/><path d="M1369.9 733.5h5.1" stroke="#b8b8a0" stroke-width="1"/><path d="M1385.1 733.8h3.8" stroke="#77775c" stroke-width="1"/><path d="M1380.6 731.6h5.5" stroke="#b8b8a0" stroke-width="1"/><path d="M1340.6 724.5h4.2" stroke="#77775c" stroke-width="1"/><path d="M1356.3 729.9h1.3" stroke="#77775c" stroke-width="1"/><path d="M1369.8 732.8h3.4" stroke="#77775c" stroke-width="1"/><path d="M1360.7 724.9h5.7" stroke="#ffffff" stroke-width="1"/><path d="M1341.0 730.8h4.7" stroke="#55553f" stroke-width="1"/><path d="M1349.6 725.0h2.3" stroke="#b8b8a0" stroke-width="1"/><path d="M1348.5 732.4h3.3" stroke="#55553f" stroke-width="1"/><path d="M1340.1 735.8h2.4" stroke="#77775c" stroke-width="1"/><path d="M1369.3 732.4h1.4" stroke="#b8b8a0" stroke-width="1"/><path d="M1353.9 732.5h4.5" stroke="#ffffff" stroke-width="1"/><path d="M1366.7 724.2h1.3" stroke="#e8e8e0" stroke-width="1"/><path d="M1388.5 725.3h2.1" stroke="#55553f" stroke-width="1"/><path d="M1351.7 730.7h3.3" stroke="#55553f" stroke-width="1"/><path d="M1377.4 736.9h3.7" stroke="#e8e8e0" stroke-width="1"/><path d="M1388.8 736.2h1.1" stroke="#55553f" stroke-width="1"/><path d="M1340.1 730.6h6.0" stroke="#e8e8e0" stroke-width="1"/><path d="M1356.9 735.9h5.7" stroke="#77775c" stroke-width="1"/><path d="M1367.4 725.8h3.6" stroke="#e8e8e0" stroke-width="1"/><path d="M1343.2 734.7h3.5" stroke="#77775c" stroke-width="1"/><path d="M1374.0 727.0h5.5" stroke="#55553f" stroke-width="1"/></g>
<linearGradient id="g2" x1="0" x2="1" y1="0" y2="0"><stop offset="0" stop-color="#2c290f"/><stop offset=".09" stop-color="#474218"/><stop offset=".45" stop-color="#524c1c"/><stop offset=".9" stop-color="#484319"/><stop offset="1" stop-color="#28250e"/></linearGradient>
<path d="M1404,630 L1457.500,630 C1457,660 1457,690 1457,717 L1402,717 C1404,690 1405,660 1404,630Z" fill="url(#g2)" filter="url(#bl)"/>
<path d="M1404,630 L1457.500,630 C1457,660 1457,690 1457,717 L1402,717 C1404,690 1405,660 1404,630Z" fill="url(#shade)"/>
<rect x="1402" y="717" width="56" height="21" fill="#17160d"/>
<rect x="1402" y="717" width="56" height="1" fill="#4a1a1a"/>
<g filter="url(#bl2)"><path d="M1421.7 721.9h5.7" stroke="#3a3a2c" stroke-width="1"/><path d="M1422.3 732.1h3.1" stroke="#3a3a2c" stroke-width="1"/><path d="M1417.8 734.1h1.0" stroke="#c8c8b0" stroke-width="1"/><path d="M1444.0 721.2h5.6" stroke="#55553f" stroke-width="1"/><path d="M1447.1 724.2h2.9" stroke="#3a3a2c" stroke-width="1"/><path d="M1421.5 734.7h1.4" stroke="#3a3a2c" stroke-width="1"/><path d="M1439.8 734.4h2.4" stroke="#55553f" stroke-width="1"/><path d="M1443.7 724.1h5.7" stroke="#8a8a70" stroke-width="1"/><path d="M1450.6 726.9h2.6" stroke="#c8c8b0" stroke-width="1"/><path d="M1441.3 726.7h1.1" stroke="#3a3a2c" stroke-width="1"/><path d="M1447.7 735.9h3.7" stroke="#55553f" stroke-width="1"/><path d="M1404.5 732.2h3.3" stroke="#8a8a70" stroke-width="1"/><path d="M1434.2 724.2h1.2" stroke="#e0e0d0" stroke-width="1"/><path d="M1408.4 727.5h2.7" stroke="#c8c8b0" stroke-width="1"/><path d="M1414.8 732.3h4.3" stroke="#3a3a2c" stroke-width="1"/><path d="M1434.8 724.4h3.8" stroke="#3a3a2c" stroke-width="1"/><path d="M1408.0 730.6h1.4" stroke="#e0e0d0" stroke-width="1"/><path d="M1447.3 727.9h2.1" stroke="#c8c8b0" stroke-width="1"/><path d="M1451.8 727.1h1.7" stroke="#8a8a70" stroke-width="1"/><path d="M1414.2 722.1h3.8" stroke="#c8c8b0" stroke-width="1"/><path d="M1414.0 723.7h3.8" stroke="#55553f" stroke-width="1"/><path d="M1439.5 726.4h3.1" stroke="#e0e0d0" stroke-width="1"/><path d="M1412.5 723.9h4.8" stroke="#3a3a2c" stroke-width="1"/><path d="M1415.9 736.4h1.6" stroke="#e0e0d0" stroke-width="1"/><path d="M1428.5 733.2h5.2" stroke="#55553f" stroke-width="1"/><path d="M1415.6 723.5h3.0" stroke="#3a3a2c" stroke-width="1"/><path d="M1423.6 724.6h5.1" stroke="#55553f" stroke-width="1"/><path d="M1408.4 726.7h4.8" stroke="#3a3a2c" stroke-width="1"/><path d="M1450.4 727.8h1.4" stroke="#e0e0d0" stroke-width="1"/><path d="M1444.8 736.5h2.2" stroke="#55553f" stroke-width="1"/><path d="M1413.2 721.7h5.9" stroke="#55553f" stroke-width="1"/><path d="M1449.1 732.0h4.2" stroke="#3a3a2c" stroke-width="1"/><path d="M1406.3 733.0h1.0" stroke="#8a8a70" stroke-width="1"/><path d="M1413.6 735.6h4.2" stroke="#c8c8b0" stroke-width="1"/><path d="M1450.1 730.3h3.6" stroke="#3a3a2c" stroke-width="1"/><path d="M1436.9 721.0h1.4" stroke="#e0e0d0" stroke-width="1"/><path d="M1449.2 722.5h2.3" stroke="#e0e0d0" stroke-width="1"/><path d="M1402.1 728.7h6.0" stroke="#c8c8b0" stroke-width="1"/><path d="M1449.9 730.6h5.4" stroke="#3a3a2c" stroke-width="1"/><path d="M1428.3 728.8h1.1" stroke="#3a3a2c" stroke-width="1"/><path d="M1437.2 724.5h1.1" stroke="#3a3a2c" stroke-width="1"/><path d="M1446.2 730.6h1.4" stroke="#8a8a70" stroke-width="1"/><path d="M1435.4 735.7h2.1" stroke="#55553f" stroke-width="1"/><path d="M1436.8 731.9h2.8" stroke="#3a3a2c" stroke-width="1"/><path d="M1411.9 733.3h4.7" stroke="#e0e0d0" stroke-width="1"/><path d="M1405.4 727.9h2.0" stroke="#8a8a70" stroke-width="1"/><path d="M1413.5 723.0h4.8" stroke="#c8c8b0" stroke-width="1"/><path d="M1407.5 730.2h4.1" stroke="#8a8a70" stroke-width="1"/><path d="M1426.3 735.4h1.3" stroke="#e0e0d0" stroke-width="1"/><path d="M1409.3 726.1h2.1" stroke="#e0e0d0" stroke-width="1"/><path d="M1409.1 719.9h1.3" stroke="#3a3a2c" stroke-width="1"/><path d="M1424.5 731.8h2.6" stroke="#55553f" stroke-width="1"/><path d="M1451.9 735.8h2.6" stroke="#8a8a70" stroke-width="1"/><path d="M1434.6 728.4h3.3" stroke="#c8c8b0" stroke-width="1"/><path d="M1435.2 725.8h2.9" stroke="#c8c8b0" stroke-width="1"/><path d="M1424.1 721.0h1.4" stroke="#55553f" stroke-width="1"/><path d="M1419.6 736.2h1.6" stroke="#8a8a70" stroke-width="1"/><path d="M1421.0 732.8h2.5" stroke="#3a3a2c" stroke-width="1"/><path d="M1406.4 731.7h2.0" stroke="#e0e0d0" stroke-width="1"/><path d="M1448.0 722.5h2.8" stroke="#3a3a2c" stroke-width="1"/><path d="M1403.5 726.4h5.1" stroke="#3a3a2c" stroke-width="1"/><path d="M1404.0 719.6h1.3" stroke="#55553f" stroke-width="1"/><path d="M1414.9 732.5h5.5" stroke="#c8c8b0" stroke-width="1"/><path d="M1420.1 725.0h5.8" stroke="#55553f" stroke-width="1"/><path d="M1415.1 731.9h2.6" stroke="#c8c8b0" stroke-width="1"/><path d="M1416.9 732.0h4.0" stroke="#55553f" stroke-width="1"/><path d="M1403.2 723.2h3.4" stroke="#3a3a2c" stroke-width="1"/><path d="M1449.7 726.0h2.3" stroke="#3a3a2c" stroke-width="1"/><path d="M1442.7 721.4h3.5" stroke="#55553f" stroke-width="1"/><path d="M1442.1 732.3h5.1" stroke="#8a8a70" stroke-width="1"/><path d="M1432.4 724.9h2.6" stroke="#c8c8b0" stroke-width="1"/><path d="M1441.2 729.7h3.6" stroke="#3a3a2c" stroke-width="1"/><path d="M1439.6 723.5h1.3" stroke="#55553f" stroke-width="1"/><path d="M1426.1 728.8h1.8" stroke="#3a3a2c" stroke-width="1"/><path d="M1446.2 736.8h2.3" stroke="#55553f" stroke-width="1"/><path d="M1412.4 726.6h5.9" stroke="#3a3a2c" stroke-width="1"/><path d="M1410.7 721.4h3.3" stroke="#8a8a70" stroke-width="1"/><path d="M1439.4 734.2h4.3" stroke="#55553f" stroke-width="1"/><path d="M1441.0 724.3h2.4" stroke="#c8c8b0" stroke-width="1"/><path d="M1420.6 732.3h2.0" stroke="#8a8a70" stroke-width="1"/><path d="M1411.3 723.2h2.4" stroke="#e0e0d0" stroke-width="1"/><path d="M1411.4 720.2h2.3" stroke="#8a8a70" stroke-width="1"/><path d="M1427.4 723.2h5.0" stroke="#3a3a2c" stroke-width="1"/><path d="M1451.5 720.8h3.4" stroke="#8a8a70" stroke-width="1"/></g>
<linearGradient id="g3" x1="0" x2="1" y1="0" y2="0"><stop offset="0" stop-color="#2f2c11"/><stop offset=".09" stop-color="#4b461c"/><stop offset=".45" stop-color="#575120"/><stop offset=".9" stop-color="#4d481c"/><stop offset="1" stop-color="#2b2810"/></linearGradient>
<path d="M1258.500,740.500 L1285,743 L1316.600,742.300 C1316,760 1313,772 1313,780 C1313,800 1314.500,820 1315.400,833 L1256,833 C1257.500,815 1261.500,795 1261.500,780 C1261,765 1259,752 1258.500,740.500Z" fill="url(#g3)" filter="url(#bl)"/>
<path d="M1258.500,740.500 L1285,743 L1316.600,742.300 C1316,760 1313,772 1313,780 C1313,800 1314.500,820 1315.400,833 L1256,833 C1257.500,815 1261.500,795 1261.500,780 C1261,765 1259,752 1258.500,740.500Z" fill="url(#shade)"/>
<rect x="1256" y="833" width="60" height="21" fill="#17160d"/>
<rect x="1256" y="833" width="60" height="1" fill="#4a1a1a"/>
<g filter="url(#bl2)"><path d="M1301.4 851.5h1.2" stroke="#8a8a70" stroke-width="1"/><path d="M1268.6 835.9h4.0" stroke="#c0c0a8" stroke-width="1"/><path d="M1266.5 836.4h3.6" stroke="#55553f" stroke-width="1"/><path d="M1280.3 839.7h4.9" stroke="#3a3a2c" stroke-width="1"/><path d="M1261.7 845.7h4.1" stroke="#55553f" stroke-width="1"/><path d="M1258.0 841.1h1.2" stroke="#8a8a70" stroke-width="1"/><path d="M1258.1 848.2h5.6" stroke="#3a3a2c" stroke-width="1"/><path d="M1300.2 842.4h2.9" stroke="#c0c0a8" stroke-width="1"/><path d="M1272.9 838.7h5.0" stroke="#c0c0a8" stroke-width="1"/><path d="M1282.1 842.3h5.0" stroke="#c0c0a8" stroke-width="1"/><path d="M1264.3 844.6h4.3" stroke="#2c2c22" stroke-width="1"/><path d="M1293.6 842.4h2.4" stroke="#8a8a70" stroke-width="1"/><path d="M1278.6 835.9h4.7" stroke="#8a8a70" stroke-width="1"/><path d="M1278.4 835.3h4.8" stroke="#8a8a70" stroke-width="1"/><path d="M1290.8 842.0h3.0" stroke="#3a3a2c" stroke-width="1"/><path d="M1279.4 837.8h1.6" stroke="#3a3a2c" stroke-width="1"/><path d="M1277.9 850.9h3.3" stroke="#55553f" stroke-width="1"/><path d="M1263.0 835.9h1.7" stroke="#2c2c22" stroke-width="1"/><path d="M1260.8 846.2h2.9" stroke="#c0c0a8" stroke-width="1"/><path d="M1265.3 841.3h1.8" stroke="#55553f" stroke-width="1"/><path d="M1306.0 837.0h3.5" stroke="#55553f" stroke-width="1"/><path d="M1272.3 850.1h1.2" stroke="#2c2c22" stroke-width="1"/><path d="M1273.0 845.9h4.2" stroke="#3a3a2c" stroke-width="1"/><path d="M1304.8 846.2h5.1" stroke="#55553f" stroke-width="1"/><path d="M1290.6 850.4h4.1" stroke="#c0c0a8" stroke-width="1"/><path d="M1301.7 849.9h1.9" stroke="#55553f" stroke-width="1"/><path d="M1258.3 851.9h1.8" stroke="#8a8a70" stroke-width="1"/><path d="M1262.6 839.4h4.6" stroke="#55553f" stroke-width="1"/><path d="M1258.2 845.1h4.8" stroke="#3a3a2c" stroke-width="1"/><path d="M1292.1 840.8h2.9" stroke="#2c2c22" stroke-width="1"/><path d="M1285.7 846.3h2.5" stroke="#2c2c22" stroke-width="1"/><path d="M1272.6 839.5h2.9" stroke="#8a8a70" stroke-width="1"/><path d="M1280.1 842.9h1.1" stroke="#c0c0a8" stroke-width="1"/><path d="M1309.3 843.4h3.2" stroke="#c0c0a8" stroke-width="1"/><path d="M1298.1 843.2h1.9" stroke="#2c2c22" stroke-width="1"/><path d="M1277.6 836.2h2.8" stroke="#8a8a70" stroke-width="1"/><path d="M1261.0 843.0h3.6" stroke="#3a3a2c" stroke-width="1"/><path d="M1258.2 837.3h5.6" stroke="#8a8a70" stroke-width="1"/><path d="M1298.0 844.2h1.3" stroke="#c0c0a8" stroke-width="1"/><path d="M1304.3 846.7h4.9" stroke="#3a3a2c" stroke-width="1"/><path d="M1302.3 852.9h4.7" stroke="#3a3a2c" stroke-width="1"/><path d="M1266.5 852.7h3.5" stroke="#55553f" stroke-width="1"/><path d="M1293.1 848.0h2.1" stroke="#8a8a70" stroke-width="1"/><path d="M1289.0 839.5h2.6" stroke="#c0c0a8" stroke-width="1"/><path d="M1270.8 849.7h1.7" stroke="#c0c0a8" stroke-width="1"/><path d="M1308.1 843.6h4.0" stroke="#c0c0a8" stroke-width="1"/><path d="M1283.3 840.7h1.2" stroke="#55553f" stroke-width="1"/><path d="M1277.8 846.5h2.4" stroke="#8a8a70" stroke-width="1"/></g>
<linearGradient id="g4" x1="0" x2="1" y1="0" y2="0"><stop offset="0" stop-color="#2f280e"/><stop offset=".09" stop-color="#4b4016"/><stop offset=".45" stop-color="#574a1a"/><stop offset=".9" stop-color="#4d4117"/><stop offset="1" stop-color="#2b240d"/></linearGradient>
<path d="M1330,755.200 L1360,756.500 L1387.600,753.400 C1388,770 1385.500,785 1385.500,795 C1385.500,815 1390,835 1390.700,846 L1330.700,846 C1332,830 1335,812 1335,795 C1334,780 1331,768 1330,755.200Z" fill="url(#g4)" filter="url(#bl)"/>
<path d="M1330,755.200 L1360,756.500 L1387.600,753.400 C1388,770 1385.500,785 1385.500,795 C1385.500,815 1390,835 1390.700,846 L1330.700,846 C1332,830 1335,812 1335,795 C1334,780 1331,768 1330,755.200Z" fill="url(#shade)"/>
<rect x="1330" y="846" width="61" height="8" fill="#17160d"/>
<rect x="1330" y="846" width="61" height="1" fill="#4a1a1a"/>
<g filter="url(#bl2)"><path d="M1379.2 848.8h4.9" stroke="#2c2c22" stroke-width="1"/><path d="M1372.3 848.2h5.3" stroke="#2c2c22" stroke-width="1"/><path d="M1360.5 850.9h5.4" stroke="#2c2c22" stroke-width="1"/><path d="M1343.9 850.7h5.3" stroke="#55553f" stroke-width="1"/><path d="M1344.6 853.0h3.9" stroke="#55553f" stroke-width="1"/><path d="M1348.2 848.4h2.2" stroke="#77775c" stroke-width="1"/><path d="M1370.9 848.2h5.1" stroke="#55553f" stroke-width="1"/><path d="M1347.1 852.8h5.4" stroke="#55553f" stroke-width="1"/><path d="M1370.3 851.7h2.1" stroke="#55553f" stroke-width="1"/><path d="M1363.9 850.2h3.6" stroke="#2c2c22" stroke-width="1"/><path d="M1337.3 849.1h4.3" stroke="#2c2c22" stroke-width="1"/><path d="M1333.0 850.8h2.5" stroke="#77775c" stroke-width="1"/></g>
<linearGradient id="g5" x1="0" x2="1" y1="0" y2="0"><stop offset="0" stop-color="#322c11"/><stop offset=".09" stop-color="#50461b"/><stop offset=".45" stop-color="#5c511f"/><stop offset=".9" stop-color="#51481b"/><stop offset="1" stop-color="#2d280f"/></linearGradient>
<path d="M1402.900,751.500 L1432,754 L1462.300,751.500 C1462,768 1458,782 1457.500,792 C1458,812 1462,830 1462.900,842 L1401.700,842 C1403,826 1407,808 1406.500,792 C1406,778 1403,765 1402.900,751.500Z" fill="url(#g5)" filter="url(#bl)"/>
<path d="M1402.900,751.500 L1432,754 L1462.300,751.500 C1462,768 1458,782 1457.500,792 C1458,812 1462,830 1462.900,842 L1401.700,842 C1403,826 1407,808 1406.500,792 C1406,778 1403,765 1402.900,751.500Z" fill="url(#shade)"/>
<rect x="1401" y="842" width="62" height="12" fill="#17160d"/>
<rect x="1401" y="842" width="62" height="1" fill="#4a1a1a"/>
<g filter="url(#bl2)"><path d="M1421.0 846.0h3.9" stroke="#77775c" stroke-width="1"/><path d="M1408.5 847.3h5.1" stroke="#3a3a2c" stroke-width="1"/><path d="M1408.5 852.4h2.2" stroke="#3a3a2c" stroke-width="1"/><path d="M1426.2 844.6h1.7" stroke="#55553f" stroke-width="1"/><path d="M1423.5 846.4h1.1" stroke="#77775c" stroke-width="1"/><path d="M1451.0 849.4h3.9" stroke="#77775c" stroke-width="1"/><path d="M1453.5 850.6h2.2" stroke="#2c2c22" stroke-width="1"/><path d="M1403.5 848.8h3.0" stroke="#3a3a2c" stroke-width="1"/><path d="M1409.9 852.2h1.5" stroke="#77775c" stroke-width="1"/><path d="M1431.9 852.5h1.7" stroke="#3a3a2c" stroke-width="1"/><path d="M1430.0 849.8h4.2" stroke="#2c2c22" stroke-width="1"/><path d="M1446.5 845.6h2.5" stroke="#55553f" stroke-width="1"/><path d="M1436.1 852.9h4.6" stroke="#2c2c22" stroke-width="1"/><path d="M1441.1 844.1h5.2" stroke="#2c2c22" stroke-width="1"/><path d="M1405.5 849.9h1.9" stroke="#2c2c22" stroke-width="1"/><path d="M1415.6 849.8h1.6" stroke="#55553f" stroke-width="1"/><path d="M1440.9 846.4h3.8" stroke="#2c2c22" stroke-width="1"/><path d="M1439.4 852.3h5.9" stroke="#55553f" stroke-width="1"/></g>
<linearGradient id="g6" x1="0" x2="1" y1="0" y2="0"><stop offset="0" stop-color="#2a260e"/><stop offset=".09" stop-color="#443d16"/><stop offset=".45" stop-color="#4f471a"/><stop offset=".9" stop-color="#463f17"/><stop offset="1" stop-color="#27230d"/></linearGradient>
<path d="M1255.500,860 L1280,861 L1307,858 C1308,880 1308.800,900 1308.800,915 C1309,930 1313,940 1314.400,947 L1255.500,950 C1256,935 1258,915 1258,900 C1258,885 1256,872 1255.500,860Z" fill="url(#g6)" filter="url(#bl)"/>
<path d="M1255.500,860 L1280,861 L1307,858 C1308,880 1308.800,900 1308.800,915 C1309,930 1313,940 1314.400,947 L1255.500,950 C1256,935 1258,915 1258,900 C1258,885 1256,872 1255.500,860Z" fill="url(#shade)"/>
<rect x="1255" y="948" width="60" height="25" fill="#17160d"/>
<rect x="1255" y="948" width="60" height="1" fill="#4a1a1a"/>
<g filter="url(#bl2)"><path d="M1289.7 971.2h2.1" stroke="#a8a890" stroke-width="1"/><path d="M1255.8 955.7h2.2" stroke="#4a4a38" stroke-width="1"/><path d="M1306.0 966.4h2.6" stroke="#2c2c22" stroke-width="1"/><path d="M1272.7 955.3h5.5" stroke="#a8a890" stroke-width="1"/><path d="M1280.4 968.5h4.5" stroke="#3a3a2c" stroke-width="1"/><path d="M1278.6 965.9h3.9" stroke="#77775c" stroke-width="1"/><path d="M1297.6 958.6h3.9" stroke="#a8a890" stroke-width="1"/><path d="M1304.2 953.2h1.1" stroke="#3a3a2c" stroke-width="1"/><path d="M1288.6 953.6h5.9" stroke="#3a3a2c" stroke-width="1"/><path d="M1256.7 953.0h4.2" stroke="#3a3a2c" stroke-width="1"/><path d="M1292.6 966.2h1.3" stroke="#a8a890" stroke-width="1"/><path d="M1296.1 954.4h5.8" stroke="#a8a890" stroke-width="1"/><path d="M1303.1 951.5h5.3" stroke="#2c2c22" stroke-width="1"/><path d="M1260.8 954.5h1.6" stroke="#3a3a2c" stroke-width="1"/><path d="M1306.3 970.0h4.8" stroke="#3a3a2c" stroke-width="1"/><path d="M1299.6 963.9h2.4" stroke="#3a3a2c" stroke-width="1"/><path d="M1262.2 967.4h4.2" stroke="#77775c" stroke-width="1"/><path d="M1272.2 959.3h1.1" stroke="#77775c" stroke-width="1"/><path d="M1305.2 951.1h4.8" stroke="#77775c" stroke-width="1"/><path d="M1296.5 963.2h3.4" stroke="#77775c" stroke-width="1"/><path d="M1288.4 950.7h3.1" stroke="#2c2c22" stroke-width="1"/><path d="M1283.0 952.2h3.3" stroke="#3a3a2c" stroke-width="1"/><path d="M1284.0 954.8h5.3" stroke="#3a3a2c" stroke-width="1"/><path d="M1286.0 956.3h3.2" stroke="#a8a890" stroke-width="1"/><path d="M1265.9 966.8h5.9" stroke="#3a3a2c" stroke-width="1"/><path d="M1273.8 952.1h4.5" stroke="#4a4a38" stroke-width="1"/><path d="M1307.2 963.0h5.8" stroke="#a8a890" stroke-width="1"/><path d="M1269.1 970.8h2.4" stroke="#4a4a38" stroke-width="1"/><path d="M1305.7 955.1h1.8" stroke="#3a3a2c" stroke-width="1"/><path d="M1281.5 971.8h3.8" stroke="#3a3a2c" stroke-width="1"/><path d="M1288.9 957.8h3.0" stroke="#2c2c22" stroke-width="1"/><path d="M1303.2 966.4h3.1" stroke="#3a3a2c" stroke-width="1"/><path d="M1275.1 956.7h3.1" stroke="#a8a890" stroke-width="1"/><path d="M1282.1 958.3h5.4" stroke="#4a4a38" stroke-width="1"/><path d="M1306.0 952.8h4.0" stroke="#a8a890" stroke-width="1"/><path d="M1289.9 957.7h2.6" stroke="#4a4a38" stroke-width="1"/><path d="M1301.9 959.9h3.8" stroke="#77775c" stroke-width="1"/><path d="M1264.2 959.7h4.9" stroke="#a8a890" stroke-width="1"/><path d="M1267.5 957.3h4.2" stroke="#4a4a38" stroke-width="1"/><path d="M1282.4 955.9h4.8" stroke="#a8a890" stroke-width="1"/><path d="M1263.3 953.4h2.2" stroke="#77775c" stroke-width="1"/><path d="M1287.6 957.7h2.2" stroke="#4a4a38" stroke-width="1"/><path d="M1269.0 971.0h6.0" stroke="#4a4a38" stroke-width="1"/><path d="M1307.0 952.2h2.9" stroke="#4a4a38" stroke-width="1"/><path d="M1297.9 966.1h3.2" stroke="#4a4a38" stroke-width="1"/><path d="M1260.9 970.1h2.4" stroke="#2c2c22" stroke-width="1"/><path d="M1280.1 950.3h5.3" stroke="#2c2c22" stroke-width="1"/><path d="M1292.4 961.0h4.2" stroke="#2c2c22" stroke-width="1"/><path d="M1256.2 955.7h4.7" stroke="#3a3a2c" stroke-width="1"/><path d="M1295.0 970.0h3.2" stroke="#a8a890" stroke-width="1"/></g>
<g filter="url(#bl2)"><path d="M1346.6 716l15.9 -16.300l4.900 8.500l6.100 -9.800l17.200 17.200l-1.300 2.400l-42.800 1.200z" fill="#d8d4e0" opacity=".38"/><path d="M1352 717l10 -12l4 7l6 -8l12 11M1350 717.500h34M1360 648.500l4 3.500" stroke="#f4f0ff" stroke-width="1.600" fill="none"/><path d="M1281.700 720.500l14 -2l17.800 4.400M1283 707l11 11M1299 715.600l12 -5" stroke="#f4f0ff" stroke-width="1.500" fill="none"/><path d="M1262 818l14 -2l10 2l14 -3M1262 827l20 -2l20 2l10 2" stroke="#f8f4e0" stroke-width="1.300" fill="none"/></g>
<g fill="none" stroke="#f4f0d8" stroke-width=".9" stroke-dasharray="5 2 3 3 7 2" filter="url(#bl2)">
<path d="M1267 712l6 -2l5 3l6 -3l5 3l8 -4l6 3"/>
<path d="M1272 722h12l6 -2h16l8 2"/>
<path d="M1284 707l6 9M1300 711l8 -4M1296 647l4 1"/>
<path d="M1345 649l8 5l8 -3l8 -4"/>
<path d="M1344 712l10 -10l6 8l8 -6l10 8l6 2"/>
<path d="M1352 715h20l10 2"/>
<path d="M1373 698l12 9"/>
<path d="M1411 637l12 1l10 2l6 1"/>
<path d="M1410 706h12"/>
<path d="M1268 747l8 1l6 2l10 -1l8 -1"/>
<path d="M1264 818l10 -2l8 2l10 -3l10 1"/>
<path d="M1258 828l12 -2h14l16 3l8 2"/>
<path d="M1342 763l10 1l12 1l10 -1"/>
<path d="M1344 831l10 1l10 3l8 2"/>
<path d="M1346 843h20l12 1"/>
<path d="M1418 761l10 -1l8 -1l8 -1"/>
<path d="M1410 827h14l16 -1l10 2l8 6"/>
<path d="M1404 836h30l20 1"/>
<path d="M1406 839h24"/>
<path d="M1262 866l10 -1l8 2l10 -1"/>
<path d="M1266 936l12 -3l10 1l8 -3l6 2"/>
<path d="M1258 944h20l16 -2l14 -1"/>
</g>
<g fill="none" stroke="#a8983e" stroke-width="1.400" stroke-linecap="round" opacity=".3" filter="url(#bl)">
<path d="M1267 712l6 -2l5 3l6 -3l5 3l8 -4l6 3" transform="translate(0 1)"/>
<path d="M1272 722h12l6 -2h16l8 2" transform="translate(0 1)"/>
<path d="M1284 707l6 9M1300 711l8 -4M1296 647l4 1" transform="translate(0 1)"/>
<path d="M1345 649l8 5l8 -3l8 -4" transform="translate(0 1)"/>
<path d="M1344 712l10 -10l6 8l8 -6l10 8l6 2" transform="translate(0 1)"/>
<path d="M1352 715h20l10 2" transform="translate(0 1)"/>
<path d="M1373 698l12 9" transform="translate(0 1)"/>
<path d="M1411 637l12 1l10 2l6 1" transform="translate(0 1)"/>
<path d="M1410 706h12" transform="translate(0 1)"/>
<path d="M1268 747l8 1l6 2l10 -1l8 -1" transform="translate(0 1)"/>
<path d="M1264 818l10 -2l8 2l10 -3l10 1" transform="translate(0 1)"/>
<path d="M1258 828l12 -2h14l16 3l8 2" transform="translate(0 1)"/>
<path d="M1342 763l10 1l12 1l10 -1" transform="translate(0 1)"/>
<path d="M1344 831l10 1l10 3l8 2" transform="translate(0 1)"/>
<path d="M1346 843h20l12 1" transform="translate(0 1)"/>
<path d="M1418 761l10 -1l8 -1l8 -1" transform="translate(0 1)"/>
<path d="M1410 827h14l16 -1l10 2l8 6" transform="translate(0 1)"/>
<path d="M1404 836h30l20 1" transform="translate(0 1)"/>
<path d="M1406 839h24" transform="translate(0 1)"/>
<path d="M1262 866l10 -1l8 2l10 -1" transform="translate(0 1)"/>
<path d="M1266 936l12 -3l10 1l8 -3l6 2" transform="translate(0 1)"/>
<path d="M1258 944h20l16 -2l14 -1" transform="translate(0 1)"/>
</g>
</g>
<g font-family="Liberation Sans" font-size="10.200" fill="#000">
<g text-anchor="end">
<text x="1036.500" y="672.0">100</text>
<text x="1036.500" y="710.4">200</text>
<text x="1036.500" y="748.9">300</text>
<text x="1036.500" y="787.3">400</text>
<text x="1036.500" y="825.7">500</text>
<text x="1036.500" y="864.1">600</text>
<text x="1036.500" y="902.6">700</text>
<text x="1036.500" y="941.0">800</text>
</g><g text-anchor="middle">
<text x="1291.0" y="996">100</text>
<text x="1329.2" y="996">200</text>
<text x="1367.4" y="996">300</text>
<text x="1405.6" y="996">400</text>
<text x="1443.8" y="996">500</text>
</g></g>
</svg>
<div class="a" style="left:1426px;top:684px;width:57px;height:66px;background:#ffffe1;border:1px solid #000"></div>
<div class="t" style="left:1427px;width:55px;text-align:center;top:687.500px;font-size:12px;font-weight:bold">Red</div>
<div class="t" style="left:1430px;top:701.900px;font-size:11.700px;line-height:16px;letter-spacing:-.42px">X:447<br>Y:90<br>Z:0.33182</div>
<!-- right panel -->
<div class="a" style="left:1724px;top:43px;width:5px;height:978px;background:#fff"></div>
<div class="a" style="left:1729px;top:44px;width:2px;height:977px;background:#6d6d6d"></div>
<div class="a" style="left:1731px;top:44px;width:189px;height:977px;background:#f0f0f0"></div>
<div class="a" style="left:1731px;top:44px;width:189px;height:32px;background:#fff;border-top:1px solid #a0a0a0"></div>
<div class="a" style="left:1731px;top:75px;width:189px;height:3px;background:#e9e9e9"></div>
<div class="a" style="left:1731px;top:78px;width:189px;height:1px;background:#a0a0a0"></div>
<svg style="left:1731px;top:44px" width="60" height="30" viewBox="1731 44 60 30">
<g fill="#3a3a3a" transform="translate(1722 -595)">
<path d="M27.300 646l5.700 5.500l-3 .900l-1.900 2.200l-.300 3.150l-1.200 1.550l-1.900 -1.900l-1.300 -.300l-6.400 4.900l4.900 -6.400l-2.200 -2.850l.300 -1.250l2.500 -.300h2.200l2.200 -2.500l.100 -2.200z"/>
</g>
<g fill="none" stroke="#222" stroke-width="1.800">
<rect x="1761" y="50" width="18" height="18"/>
<path d="M1767 50v18M1773 50v18M1761 56h18M1761 62h18"/>
</g>
</svg>
<div class="t tah" style="left:1783.500px;top:54px;letter-spacing:-.14px">DataSet (Multi image imp...</div>
<!-- status bar -->
<div class="a" style="left:0;top:1020px;width:1920px;height:1px;background:#a0a0a0"></div>
<div class="a" style="left:0;top:1021px;width:1920px;height:1px;background:#6d6d6d"></div>
<div class="a" style="left:0;top:1022px;width:1920px;height:16px;background:#f0f0f0"></div>
<div class="a" style="left:0;top:1038px;width:1920px;height:2px;background:#fff"></div>
<div class="a" style="left:0;top:1020px;width:1px;height:19px;background:#a0a0a0"></div><div class="a" style="left:1px;top:1021px;width:1px;height:17px;background:#6d6d6d"></div>
<div class="a" style="left:1636px;top:1022px;width:1px;height:16px;background:#a0a0a0"></div>
<div class="a" style="left:1762px;top:1022px;width:1px;height:16px;background:#a0a0a0"></div>
<div class="t tah" style="left:1637px;top:1025px;letter-spacing:-.05px">Update: Available!</div>
<div class="t tah" style="left:1765px;top:1025px;letter-spacing:-.29px">Mem Usage: 777 MB of 21.7 GB</div>
</body></html>
